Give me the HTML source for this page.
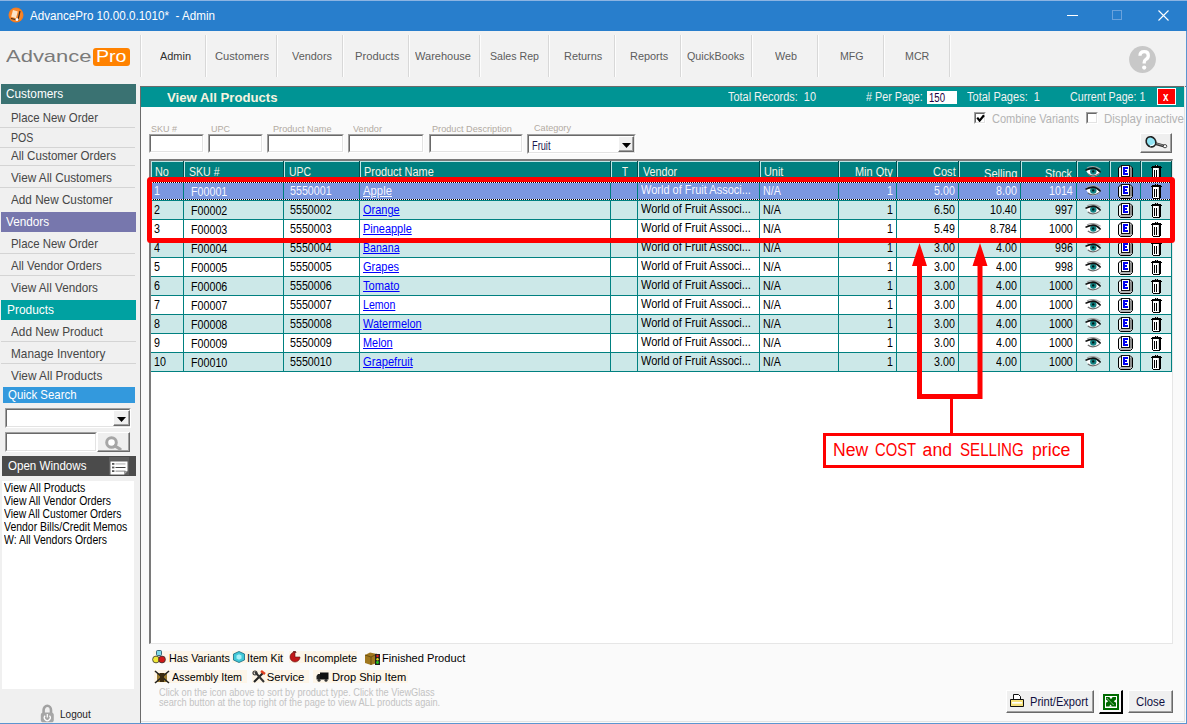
<!DOCTYPE html><html><head><meta charset="utf-8"><style>
html,body{margin:0;padding:0;}
body{width:1187px;height:724px;overflow:hidden;position:relative;background:#f0f0f0;font-family:"Liberation Sans",sans-serif;}
.t{position:absolute;white-space:pre;}
svg{display:block}
</style></head><body>
<div style="position:absolute;left:0px;top:0px;width:1187px;height:31px;background:#287ecc;"></div>
<div style="position:absolute;left:0px;top:0px;width:1187px;height:1px;background:#8cb4e2;"></div>
<svg style="position:absolute;left:8px;top:7px;" width="16" height="16" viewBox="0 0 16 16"><circle cx="8" cy="8" r="7.5" fill="#f47b20"/><circle cx="8" cy="8" r="6.5" fill="#f8862a"/><rect x="4" y="3.5" width="5" height="7" fill="#fde3c8" transform="rotate(15 6 7)"/><path d="M3 11.5 L10 13 L12 4" stroke="#3a2a20" stroke-width="1.2" fill="none"/><circle cx="9" cy="12.5" r="1.5" fill="#fff"/></svg>
<div class="t" style="left:29.50px;top:9.94px;font-size:12.30px;line-height:12.30px;color:#fff;transform:scaleX(0.9460);transform-origin:0 0;">AdvancePro 10.00.0.1010*  - Admin</div>
<div style="position:absolute;left:1067px;top:15px;width:11px;height:1px;background:#fff;"></div>
<div style="position:absolute;left:1112px;top:10px;width:10px;height:10px;background:transparent;box-sizing:border-box;border:1px solid #6aa2dc;"></div>
<svg style="position:absolute;left:1158px;top:10px;" width="11" height="11" viewBox="0 0 11 11"><path d="M0.5 0.5 L10.5 10.5 M10.5 0.5 L0.5 10.5" stroke="#fff" stroke-width="1.1"/></svg>
<div style="position:absolute;left:0px;top:31px;width:1187px;height:54px;background:#f2f2f2;"></div>
<div class="t" style="left:5.50px;top:48.46px;font-size:17.00px;line-height:17.00px;color:#7a7a7a;transform:scaleX(1.2929);transform-origin:0 0;font-weight:normal;">Advance</div>
<div style="position:absolute;left:93px;top:48px;width:37px;height:18px;background:#ff8200;border-radius:3px;"></div>
<div class="t" style="left:96.00px;top:48.46px;font-size:17.00px;line-height:17.00px;color:#fff;transform:scaleX(1.1538);transform-origin:0 0;">Pro</div>
<div style="position:absolute;left:140px;top:35px;width:1px;height:42px;background:#d8d8d8;"></div>
<div style="position:absolute;left:141px;top:35px;width:1px;height:42px;background:#fdfdfd;"></div>
<div style="position:absolute;left:205px;top:35px;width:1px;height:42px;background:#d8d8d8;"></div>
<div style="position:absolute;left:206px;top:35px;width:1px;height:42px;background:#fdfdfd;"></div>
<div style="position:absolute;left:276px;top:35px;width:1px;height:42px;background:#d8d8d8;"></div>
<div style="position:absolute;left:277px;top:35px;width:1px;height:42px;background:#fdfdfd;"></div>
<div style="position:absolute;left:342px;top:35px;width:1px;height:42px;background:#d8d8d8;"></div>
<div style="position:absolute;left:343px;top:35px;width:1px;height:42px;background:#fdfdfd;"></div>
<div style="position:absolute;left:408px;top:35px;width:1px;height:42px;background:#d8d8d8;"></div>
<div style="position:absolute;left:409px;top:35px;width:1px;height:42px;background:#fdfdfd;"></div>
<div style="position:absolute;left:479px;top:35px;width:1px;height:42px;background:#d8d8d8;"></div>
<div style="position:absolute;left:480px;top:35px;width:1px;height:42px;background:#fdfdfd;"></div>
<div style="position:absolute;left:548px;top:35px;width:1px;height:42px;background:#d8d8d8;"></div>
<div style="position:absolute;left:549px;top:35px;width:1px;height:42px;background:#fdfdfd;"></div>
<div style="position:absolute;left:614px;top:35px;width:1px;height:42px;background:#d8d8d8;"></div>
<div style="position:absolute;left:615px;top:35px;width:1px;height:42px;background:#fdfdfd;"></div>
<div style="position:absolute;left:680px;top:35px;width:1px;height:42px;background:#d8d8d8;"></div>
<div style="position:absolute;left:681px;top:35px;width:1px;height:42px;background:#fdfdfd;"></div>
<div style="position:absolute;left:751px;top:35px;width:1px;height:42px;background:#d8d8d8;"></div>
<div style="position:absolute;left:752px;top:35px;width:1px;height:42px;background:#fdfdfd;"></div>
<div style="position:absolute;left:817px;top:35px;width:1px;height:42px;background:#d8d8d8;"></div>
<div style="position:absolute;left:818px;top:35px;width:1px;height:42px;background:#fdfdfd;"></div>
<div style="position:absolute;left:883px;top:35px;width:1px;height:42px;background:#d8d8d8;"></div>
<div style="position:absolute;left:884px;top:35px;width:1px;height:42px;background:#fdfdfd;"></div>
<div style="position:absolute;left:949px;top:35px;width:1px;height:42px;background:#d8d8d8;"></div>
<div style="position:absolute;left:950px;top:35px;width:1px;height:42px;background:#fdfdfd;"></div>
<div class="t" style="left:159.50px;top:50.56px;font-size:11.80px;line-height:11.80px;color:#303030;transform:scaleX(0.9267);transform-origin:0 0;">Admin</div>
<div class="t" style="left:214.60px;top:50.56px;font-size:11.80px;line-height:11.80px;color:#5c5c5c;transform:scaleX(0.9465);transform-origin:0 0;">Customers</div>
<div class="t" style="left:291.50px;top:50.56px;font-size:11.80px;line-height:11.80px;color:#5c5c5c;transform:scaleX(0.9237);transform-origin:0 0;">Vendors</div>
<div class="t" style="left:355.00px;top:50.56px;font-size:11.80px;line-height:11.80px;color:#5c5c5c;transform:scaleX(0.9516);transform-origin:0 0;">Products</div>
<div class="t" style="left:415.40px;top:50.56px;font-size:11.80px;line-height:11.80px;color:#5c5c5c;transform:scaleX(0.9351);transform-origin:0 0;">Warehouse</div>
<div class="t" style="left:490.00px;top:50.56px;font-size:11.80px;line-height:11.80px;color:#5c5c5c;transform:scaleX(0.8998);transform-origin:0 0;">Sales Rep</div>
<div class="t" style="left:564.40px;top:50.56px;font-size:11.80px;line-height:11.80px;color:#5c5c5c;transform:scaleX(0.9249);transform-origin:0 0;">Returns</div>
<div class="t" style="left:630.40px;top:50.56px;font-size:11.80px;line-height:11.80px;color:#5c5c5c;transform:scaleX(0.9249);transform-origin:0 0;">Reports</div>
<div class="t" style="left:686.60px;top:50.56px;font-size:11.80px;line-height:11.80px;color:#5c5c5c;transform:scaleX(0.9118);transform-origin:0 0;">QuickBooks</div>
<div class="t" style="left:775.40px;top:50.56px;font-size:11.80px;line-height:11.80px;color:#5c5c5c;transform:scaleX(0.9139);transform-origin:0 0;">Web</div>
<div class="t" style="left:839.50px;top:50.56px;font-size:11.80px;line-height:11.80px;color:#5c5c5c;transform:scaleX(0.9009);transform-origin:0 0;">MFG</div>
<div class="t" style="left:905.10px;top:50.56px;font-size:11.80px;line-height:11.80px;color:#5c5c5c;transform:scaleX(0.9052);transform-origin:0 0;">MCR</div>
<svg style="position:absolute;left:1129px;top:46px;" width="27" height="27" viewBox="0 0 27 27"><circle cx="13.5" cy="13.5" r="13.4" fill="#c8c8c8"/><path d="M11 9.8 Q11 5.6 15.2 5.6 Q19.3 5.6 19.3 9.4 Q19.3 12 16.9 13.4 Q15.2 14.5 15.2 16.6 V17.4" stroke="#fff" stroke-width="3.3" fill="none"/><circle cx="15.2" cy="21.6" r="2.1" fill="#fff"/></svg>
<div style="position:absolute;left:1px;top:84px;width:135px;height:20px;background:#3a7272;"></div>
<div class="t" style="left:5.60px;top:87.65px;font-size:12.40px;line-height:12.40px;color:#fff;transform:scaleX(0.9541);transform-origin:0 0;">Customers</div>
<div class="t" style="left:10.60px;top:111.81px;font-size:12.10px;line-height:12.10px;color:#464646;transform:scaleX(0.9442);transform-origin:0 0;">Place New Order</div>
<div style="position:absolute;left:0px;top:127px;width:135px;height:1px;background:#d4d4d4;"></div>
<div class="t" style="left:10.60px;top:131.91px;font-size:12.10px;line-height:12.10px;color:#464646;transform:scaleX(0.8774);transform-origin:0 0;">POS</div>
<div style="position:absolute;left:0px;top:147px;width:135px;height:1px;background:#d4d4d4;"></div>
<div class="t" style="left:10.60px;top:149.71px;font-size:12.10px;line-height:12.10px;color:#464646;transform:scaleX(0.9578);transform-origin:0 0;">All Customer Orders</div>
<div style="position:absolute;left:0px;top:165px;width:135px;height:1px;background:#d4d4d4;"></div>
<div class="t" style="left:10.90px;top:171.91px;font-size:12.10px;line-height:12.10px;color:#464646;transform:scaleX(0.9712);transform-origin:0 0;">View All Customers</div>
<div style="position:absolute;left:0px;top:187px;width:135px;height:1px;background:#d4d4d4;"></div>
<div class="t" style="left:11.40px;top:193.71px;font-size:12.10px;line-height:12.10px;color:#464646;transform:scaleX(0.9704);transform-origin:0 0;">Add New Customer</div>
<div style="position:absolute;left:1px;top:212px;width:135px;height:20px;background:#7777ad;"></div>
<div class="t" style="left:6.20px;top:215.85px;font-size:12.40px;line-height:12.40px;color:#fff;transform:scaleX(0.9493);transform-origin:0 0;">Vendors</div>
<div class="t" style="left:10.60px;top:237.81px;font-size:12.10px;line-height:12.10px;color:#464646;transform:scaleX(0.9442);transform-origin:0 0;">Place New Order</div>
<div style="position:absolute;left:0px;top:253px;width:135px;height:1px;background:#d4d4d4;"></div>
<div class="t" style="left:10.60px;top:260.01px;font-size:12.10px;line-height:12.10px;color:#464646;transform:scaleX(0.9505);transform-origin:0 0;">All Vendor Orders</div>
<div style="position:absolute;left:0px;top:275px;width:135px;height:1px;background:#d4d4d4;"></div>
<div class="t" style="left:10.60px;top:281.81px;font-size:12.10px;line-height:12.10px;color:#464646;transform:scaleX(0.9677);transform-origin:0 0;">View All Vendors</div>
<div style="position:absolute;left:1px;top:300px;width:135px;height:20px;background:#00a1a1;"></div>
<div class="t" style="left:6.50px;top:303.85px;font-size:12.40px;line-height:12.40px;color:#fff;transform:scaleX(0.9608);transform-origin:0 0;">Products</div>
<div class="t" style="left:11.40px;top:325.91px;font-size:12.10px;line-height:12.10px;color:#464646;transform:scaleX(0.9752);transform-origin:0 0;">Add New Product</div>
<div style="position:absolute;left:1px;top:341px;width:135px;height:1px;background:#d4d4d4;"></div>
<div class="t" style="left:10.60px;top:348.11px;font-size:12.10px;line-height:12.10px;color:#464646;transform:scaleX(0.9756);transform-origin:0 0;">Manage Inventory</div>
<div style="position:absolute;left:1px;top:363px;width:135px;height:1px;background:#d4d4d4;"></div>
<div class="t" style="left:10.60px;top:369.91px;font-size:12.10px;line-height:12.10px;color:#464646;transform:scaleX(0.9797);transform-origin:0 0;">View All Products</div>
<div style="position:absolute;left:3px;top:387px;width:132px;height:16px;background:#3399dd;"></div>
<div class="t" style="left:7.50px;top:388.85px;font-size:12.40px;line-height:12.40px;color:#fff;transform:scaleX(0.9213);transform-origin:0 0;">Quick Search</div>
<div style="position:absolute;left:5px;top:408px;width:126px;height:20px;background:#fff;box-sizing:border-box;border-top:1px solid #a0a0a0;border-left:1px solid #a0a0a0;border-bottom:1px solid #fff;border-right:1px solid #fff;"><div style="position:absolute;left:0;top:0;right:0;bottom:0;border-top:1px solid #696969;border-left:1px solid #696969;border-bottom:1px solid #e3e3e3;border-right:1px solid #e3e3e3;"></div></div>
<div style="position:absolute;left:113px;top:410px;width:17px;height:16px;background:#f0f0f0;box-sizing:border-box;border-top:1px solid #fff;border-left:1px solid #fff;border-bottom:1px solid #696969;border-right:1px solid #696969;"><div style="position:absolute;left:0;top:0;right:0;bottom:0;border-bottom:1px solid #a0a0a0;border-right:1px solid #a0a0a0;"></div></div>
<svg style="position:absolute;left:117px;top:417px;" width="9" height="5" viewBox="0 0 9 5"><path d="M0 0 L9 0 L4.5 5 Z" fill="#000"/></svg>
<div style="position:absolute;left:5px;top:432px;width:92px;height:20px;background:#fff;box-sizing:border-box;border-top:1px solid #a0a0a0;border-left:1px solid #a0a0a0;border-bottom:1px solid #fff;border-right:1px solid #fff;"><div style="position:absolute;left:0;top:0;right:0;bottom:0;border-top:1px solid #696969;border-left:1px solid #696969;border-bottom:1px solid #e3e3e3;border-right:1px solid #e3e3e3;"></div></div>
<div style="position:absolute;left:97px;top:432px;width:33px;height:20px;background:#efefef;box-sizing:border-box;border-top:1px solid #fff;border-left:1px solid #fff;border-bottom:1px solid #696969;border-right:1px solid #696969;"><div style="position:absolute;left:0;top:0;right:0;bottom:0;border-bottom:1px solid #a0a0a0;border-right:1px solid #a0a0a0;"></div></div>
<svg style="position:absolute;left:103px;top:434px;" width="22" height="16" viewBox="0 0 22 16"><circle cx="8.5" cy="8.5" r="4.8" stroke="#a6a6a6" stroke-width="3" fill="#fff"/><path d="M12 12 L17 15" stroke="#a6a6a6" stroke-width="3.2" stroke-linecap="round"/></svg>
<div style="position:absolute;left:2px;top:456px;width:134px;height:20px;background:#4b4b4b;"></div>
<div class="t" style="left:7.50px;top:459.55px;font-size:12.40px;line-height:12.40px;color:#fff;transform:scaleX(0.9337);transform-origin:0 0;">Open Windows</div>
<div style="position:absolute;left:109px;top:457px;width:20px;height:18px;background:#5e5e5e;"></div>
<svg style="position:absolute;left:110px;top:461px;" width="18" height="14" viewBox="0 0 18 14"><path d="M0.5 0.5 H17.5 V10 L14 13.5 H0.5 Z" fill="#fff"/><path d="M17.5 10 L14 13.5 V10 Z" fill="#9a9a9a"/><g fill="#555"><rect x="2" y="2" width="2.4" height="1.8"/><rect x="2" y="5.6" width="2.4" height="1.8"/><rect x="2" y="9.2" width="2.4" height="1.8"/></g><rect x="5.5" y="2.2" width="10" height="1.4" fill="#c4c4c4"/><rect x="5.5" y="6" width="10" height="1" fill="#444"/><rect x="5.5" y="9.6" width="10" height="1" fill="#888"/></svg>
<div style="position:absolute;left:2px;top:481px;width:132px;height:208px;background:#fff;"></div>
<div class="t" style="left:4.20px;top:481.79px;font-size:12.00px;line-height:12.00px;color:#000;transform:scaleX(0.8787);transform-origin:0 0;">View All Products</div>
<div class="t" style="left:4.20px;top:494.84px;font-size:12.00px;line-height:12.00px;color:#000;transform:scaleX(0.8686);transform-origin:0 0;">View All Vendor Orders</div>
<div class="t" style="left:4.20px;top:507.89px;font-size:12.00px;line-height:12.00px;color:#000;transform:scaleX(0.8552);transform-origin:0 0;">View All Customer Orders</div>
<div class="t" style="left:4.20px;top:520.94px;font-size:12.00px;line-height:12.00px;color:#000;transform:scaleX(0.8719);transform-origin:0 0;">Vendor Bills/Credit Memos</div>
<div class="t" style="left:4.20px;top:533.99px;font-size:12.00px;line-height:12.00px;color:#000;transform:scaleX(0.8741);transform-origin:0 0;">W: All Vendors Orders</div>
<svg style="position:absolute;left:40px;top:704px;" width="15" height="19" viewBox="0 0 15 19"><path d="M3.6 9.5 V6 A3.7 4.2 0 0 1 11 6 V9.5" stroke="#a2a2a2" stroke-width="2.6" fill="none"/><rect x="0.8" y="8.5" width="13" height="9.8" rx="2.6" fill="#a6a6a6"/><path d="M5.1 11.6 A3 3 0 1 0 9.5 11.6" stroke="#fff" stroke-width="1.2" fill="none"/><path d="M7.3 10 V13.4" stroke="#fff" stroke-width="1.2"/></svg>
<div class="t" style="left:59.80px;top:708.90px;font-size:11.40px;line-height:11.40px;color:#1e1e1e;transform:scaleX(0.8829);transform-origin:0 0;">Logout</div>
<div style="position:absolute;left:140px;top:86px;width:1047px;height:637px;background:#fafafa;box-sizing:border-box;border-left:1px solid #6b6b6b;border-top:1px solid #6b6b6b;"></div>
<div style="position:absolute;left:1184px;top:86px;width:1px;height:636px;background:#e3e3e3;"></div>
<div style="position:absolute;left:141px;top:721px;width:1044px;height:1px;background:#e3e3e3;"></div>
<div style="position:absolute;left:141px;top:87px;width:1043px;height:20px;background:#009494;"></div>
<div class="t" style="left:167.30px;top:91.09px;font-size:13.30px;line-height:13.30px;color:#f7f3e0;font-weight:bold;transform:scaleX(0.9912);transform-origin:0 0;">View All Products</div>
<div class="t" style="left:727.90px;top:90.59px;font-size:12.00px;line-height:12.00px;color:#f2f2f2;transform:scaleX(0.9098);transform-origin:0 0;">Total Records:  10</div>
<div class="t" style="left:865.90px;top:91.49px;font-size:12.00px;line-height:12.00px;color:#f2f2f2;transform:scaleX(0.8965);transform-origin:0 0;"># Per Page:</div>
<div style="position:absolute;left:927px;top:91px;width:30px;height:13px;background:#fff;"></div>
<div class="t" style="left:928.50px;top:92.19px;font-size:12.00px;line-height:12.00px;color:#200040;transform:scaleX(0.7984);transform-origin:0 0;">150</div>
<div class="t" style="left:967.00px;top:90.59px;font-size:12.00px;line-height:12.00px;color:#f2f2f2;transform:scaleX(0.9196);transform-origin:0 0;">Total Pages:  1</div>
<div class="t" style="left:1069.60px;top:91.19px;font-size:12.00px;line-height:12.00px;color:#f2f2f2;transform:scaleX(0.8900);transform-origin:0 0;">Current Page: 1</div>
<div style="position:absolute;left:1157px;top:88px;width:19px;height:17px;background:#fff;"></div>
<div style="position:absolute;left:1158px;top:89px;width:17px;height:15px;background:#f00;"></div>
<div class="t" style="left:1163.20px;top:90.99px;font-size:12.00px;line-height:12.00px;color:#fff;font-weight:bold;transform:scaleX(0.8258);transform-origin:0 0;">x</div>
<div style="position:absolute;left:974px;top:112px;width:12px;height:12px;background:#fff;box-sizing:border-box;border-top:1px solid #a0a0a0;border-left:1px solid #a0a0a0;border-bottom:1px solid #fff;border-right:1px solid #fff;"><div style="position:absolute;left:0;top:0;right:0;bottom:0;border-top:1px solid #696969;border-left:1px solid #696969;border-bottom:1px solid #e3e3e3;border-right:1px solid #e3e3e3;"></div></div>
<svg style="position:absolute;left:976px;top:114px;" width="9" height="8" viewBox="0 0 9 8"><path d="M1.2 3.6 L3.6 6.6 L8 1.2" stroke="#000" stroke-width="2.2" fill="none"/></svg>
<div class="t" style="left:992.20px;top:113.18px;font-size:12.60px;line-height:12.60px;color:#b4b4b4;transform:scaleX(0.8768);transform-origin:0 0;">Combine Variants</div>
<div style="position:absolute;left:1086px;top:112px;width:12px;height:12px;background:#fff;box-sizing:border-box;border-top:1px solid #a0a0a0;border-left:1px solid #a0a0a0;border-bottom:1px solid #fff;border-right:1px solid #fff;"><div style="position:absolute;left:0;top:0;right:0;bottom:0;border-top:1px solid #696969;border-left:1px solid #696969;border-bottom:1px solid #e3e3e3;border-right:1px solid #e3e3e3;"></div></div>
<div class="t" style="left:1104.40px;top:113.18px;font-size:12.60px;line-height:12.60px;color:#b4b4b4;transform:scaleX(0.9142);transform-origin:0 0;">Display inactive</div>
<div class="t" style="left:150.90px;top:124.12px;font-size:9.60px;line-height:9.60px;color:#b2aaa2;transform:scaleX(0.9371);transform-origin:0 0;">SKU #</div>
<div class="t" style="left:211.10px;top:124.12px;font-size:9.60px;line-height:9.60px;color:#b2aaa2;transform:scaleX(0.9380);transform-origin:0 0;">UPC</div>
<div class="t" style="left:273.20px;top:124.02px;font-size:9.60px;line-height:9.60px;color:#b2aaa2;transform:scaleX(0.9536);transform-origin:0 0;">Product Name</div>
<div class="t" style="left:353.00px;top:124.12px;font-size:9.60px;line-height:9.60px;color:#b2aaa2;transform:scaleX(0.9529);transform-origin:0 0;">Vendor</div>
<div class="t" style="left:431.50px;top:124.22px;font-size:9.60px;line-height:9.60px;color:#b2aaa2;transform:scaleX(0.9551);transform-origin:0 0;">Product Description</div>
<div class="t" style="left:534.00px;top:122.62px;font-size:9.60px;line-height:9.60px;color:#b2aaa2;transform:scaleX(0.9493);transform-origin:0 0;">Category</div>
<div style="position:absolute;left:149px;top:134px;width:55px;height:19px;background:#fff;box-sizing:border-box;border-top:1px solid #a0a0a0;border-left:1px solid #a0a0a0;border-bottom:1px solid #fff;border-right:1px solid #fff;"><div style="position:absolute;left:0;top:0;right:0;bottom:0;border-top:1px solid #696969;border-left:1px solid #696969;border-bottom:1px solid #e3e3e3;border-right:1px solid #e3e3e3;"></div></div>
<div style="position:absolute;left:208px;top:134px;width:55px;height:19px;background:#fff;box-sizing:border-box;border-top:1px solid #a0a0a0;border-left:1px solid #a0a0a0;border-bottom:1px solid #fff;border-right:1px solid #fff;"><div style="position:absolute;left:0;top:0;right:0;bottom:0;border-top:1px solid #696969;border-left:1px solid #696969;border-bottom:1px solid #e3e3e3;border-right:1px solid #e3e3e3;"></div></div>
<div style="position:absolute;left:267px;top:134px;width:77px;height:19px;background:#fff;box-sizing:border-box;border-top:1px solid #a0a0a0;border-left:1px solid #a0a0a0;border-bottom:1px solid #fff;border-right:1px solid #fff;"><div style="position:absolute;left:0;top:0;right:0;bottom:0;border-top:1px solid #696969;border-left:1px solid #696969;border-bottom:1px solid #e3e3e3;border-right:1px solid #e3e3e3;"></div></div>
<div style="position:absolute;left:348px;top:134px;width:76px;height:19px;background:#fff;box-sizing:border-box;border-top:1px solid #a0a0a0;border-left:1px solid #a0a0a0;border-bottom:1px solid #fff;border-right:1px solid #fff;"><div style="position:absolute;left:0;top:0;right:0;bottom:0;border-top:1px solid #696969;border-left:1px solid #696969;border-bottom:1px solid #e3e3e3;border-right:1px solid #e3e3e3;"></div></div>
<div style="position:absolute;left:429px;top:134px;width:94px;height:19px;background:#fff;box-sizing:border-box;border-top:1px solid #a0a0a0;border-left:1px solid #a0a0a0;border-bottom:1px solid #fff;border-right:1px solid #fff;"><div style="position:absolute;left:0;top:0;right:0;bottom:0;border-top:1px solid #696969;border-left:1px solid #696969;border-bottom:1px solid #e3e3e3;border-right:1px solid #e3e3e3;"></div></div>
<div style="position:absolute;left:527px;top:134px;width:109px;height:20px;background:#fff;box-sizing:border-box;border-top:1px solid #a0a0a0;border-left:1px solid #a0a0a0;border-bottom:1px solid #fff;border-right:1px solid #fff;"><div style="position:absolute;left:0;top:0;right:0;bottom:0;border-top:1px solid #696969;border-left:1px solid #696969;border-bottom:1px solid #e3e3e3;border-right:1px solid #e3e3e3;"></div></div>
<div style="position:absolute;left:618px;top:136px;width:16px;height:16px;background:#f0f0f0;box-sizing:border-box;border-top:1px solid #fff;border-left:1px solid #fff;border-bottom:1px solid #696969;border-right:1px solid #696969;"><div style="position:absolute;left:0;top:0;right:0;bottom:0;border-bottom:1px solid #a0a0a0;border-right:1px solid #a0a0a0;"></div></div>
<svg style="position:absolute;left:622px;top:143px;" width="9" height="5" viewBox="0 0 9 5"><path d="M0 0 L9 0 L4.5 5 Z" fill="#000"/></svg>
<div class="t" style="left:531.60px;top:138.85px;font-size:13.00px;line-height:13.00px;color:#1a1a50;transform:scaleX(0.7115);transform-origin:0 0;">Fruit</div>
<div style="position:absolute;left:1140px;top:133px;width:32px;height:20px;background:#efefef;box-sizing:border-box;border-top:1px solid #fff;border-left:1px solid #fff;border-bottom:1px solid #696969;border-right:1px solid #696969;"><div style="position:absolute;left:0;top:0;right:0;bottom:0;border-bottom:1px solid #a0a0a0;border-right:1px solid #a0a0a0;"></div></div>
<svg style="position:absolute;left:1145px;top:135px;" width="23" height="15" viewBox="0 0 23 15"><path d="M9.5 8.3 L18.5 10.8" stroke="#333" stroke-width="2.8" stroke-linecap="round"/><path d="M10 8.2 L18 10.4" stroke="#aaa" stroke-width="0.8"/><ellipse cx="20" cy="11.2" rx="1.8" ry="1.6" fill="#fff" stroke="#333" stroke-width="0.9"/><ellipse cx="6" cy="6.8" rx="4.6" ry="5.3" transform="rotate(-35 6 6.8)" fill="#90e4f4" stroke="#222" stroke-width="1.6"/><path d="M5 11 Q8 10.5 9.5 8.5" stroke="#fff" stroke-width="1.2" fill="none"/></svg>
<div style="position:absolute;left:149px;top:159px;width:1024px;height:485px;background:#fff;box-sizing:border-box;border-top:2px solid #7a7a7a;border-left:2px solid #7a7a7a;border-right:1px solid #e6e6e6;border-bottom:1px solid #e6e6e6;"></div>
<div style="position:absolute;left:151px;top:161px;width:1021px;height:21px;background:#008080;"></div>
<div style="position:absolute;left:151px;top:161px;width:33px;height:1px;background:#bfe6e6;"></div>
<div style="position:absolute;left:151px;top:161px;width:1px;height:21px;background:#bfe6e6;"></div>
<div style="position:absolute;left:183px;top:161px;width:1px;height:21px;background:#004f4f;"></div>
<div style="position:absolute;left:184px;top:161px;width:100px;height:1px;background:#bfe6e6;"></div>
<div style="position:absolute;left:184px;top:161px;width:1px;height:21px;background:#bfe6e6;"></div>
<div style="position:absolute;left:283px;top:161px;width:1px;height:21px;background:#004f4f;"></div>
<div style="position:absolute;left:284px;top:161px;width:76px;height:1px;background:#bfe6e6;"></div>
<div style="position:absolute;left:284px;top:161px;width:1px;height:21px;background:#bfe6e6;"></div>
<div style="position:absolute;left:359px;top:161px;width:1px;height:21px;background:#004f4f;"></div>
<div style="position:absolute;left:360px;top:161px;width:251px;height:1px;background:#bfe6e6;"></div>
<div style="position:absolute;left:360px;top:161px;width:1px;height:21px;background:#bfe6e6;"></div>
<div style="position:absolute;left:610px;top:161px;width:1px;height:21px;background:#004f4f;"></div>
<div style="position:absolute;left:611px;top:161px;width:27px;height:1px;background:#bfe6e6;"></div>
<div style="position:absolute;left:611px;top:161px;width:1px;height:21px;background:#bfe6e6;"></div>
<div style="position:absolute;left:637px;top:161px;width:1px;height:21px;background:#004f4f;"></div>
<div style="position:absolute;left:638px;top:161px;width:122px;height:1px;background:#bfe6e6;"></div>
<div style="position:absolute;left:638px;top:161px;width:1px;height:21px;background:#bfe6e6;"></div>
<div style="position:absolute;left:759px;top:161px;width:1px;height:21px;background:#004f4f;"></div>
<div style="position:absolute;left:760px;top:161px;width:79px;height:1px;background:#bfe6e6;"></div>
<div style="position:absolute;left:760px;top:161px;width:1px;height:21px;background:#bfe6e6;"></div>
<div style="position:absolute;left:838px;top:161px;width:1px;height:21px;background:#004f4f;"></div>
<div style="position:absolute;left:839px;top:161px;width:58px;height:1px;background:#bfe6e6;"></div>
<div style="position:absolute;left:839px;top:161px;width:1px;height:21px;background:#bfe6e6;"></div>
<div style="position:absolute;left:896px;top:161px;width:1px;height:21px;background:#004f4f;"></div>
<div style="position:absolute;left:897px;top:161px;width:62px;height:1px;background:#bfe6e6;"></div>
<div style="position:absolute;left:897px;top:161px;width:1px;height:21px;background:#bfe6e6;"></div>
<div style="position:absolute;left:958px;top:161px;width:1px;height:21px;background:#004f4f;"></div>
<div style="position:absolute;left:959px;top:161px;width:62px;height:1px;background:#bfe6e6;"></div>
<div style="position:absolute;left:959px;top:161px;width:1px;height:21px;background:#bfe6e6;"></div>
<div style="position:absolute;left:1020px;top:161px;width:1px;height:21px;background:#004f4f;"></div>
<div style="position:absolute;left:1021px;top:161px;width:56px;height:1px;background:#bfe6e6;"></div>
<div style="position:absolute;left:1021px;top:161px;width:1px;height:21px;background:#bfe6e6;"></div>
<div style="position:absolute;left:1076px;top:161px;width:1px;height:21px;background:#004f4f;"></div>
<div style="position:absolute;left:1077px;top:161px;width:33px;height:1px;background:#bfe6e6;"></div>
<div style="position:absolute;left:1077px;top:161px;width:1px;height:21px;background:#bfe6e6;"></div>
<div style="position:absolute;left:1109px;top:161px;width:1px;height:21px;background:#004f4f;"></div>
<div style="position:absolute;left:1110px;top:161px;width:31px;height:1px;background:#bfe6e6;"></div>
<div style="position:absolute;left:1110px;top:161px;width:1px;height:21px;background:#bfe6e6;"></div>
<div style="position:absolute;left:1140px;top:161px;width:1px;height:21px;background:#004f4f;"></div>
<div style="position:absolute;left:1141px;top:161px;width:31px;height:1px;background:#bfe6e6;"></div>
<div style="position:absolute;left:1141px;top:161px;width:1px;height:21px;background:#bfe6e6;"></div>
<div style="position:absolute;left:1171px;top:161px;width:1px;height:21px;background:#004f4f;"></div>
<div class="t" style="left:155.40px;top:166.39px;font-size:12.00px;line-height:12.00px;color:#f4f4e8;transform:scaleX(0.9049);transform-origin:0 0;">No</div>
<div class="t" style="left:188.60px;top:166.39px;font-size:12.00px;line-height:12.00px;color:#f4f4e8;transform:scaleX(0.8795);transform-origin:0 0;">SKU #</div>
<div class="t" style="left:288.70px;top:166.39px;font-size:12.00px;line-height:12.00px;color:#f4f4e8;transform:scaleX(0.8689);transform-origin:0 0;">UPC</div>
<div class="t" style="left:363.90px;top:166.39px;font-size:12.00px;line-height:12.00px;color:#f4f4e8;transform:scaleX(0.9090);transform-origin:0 0;">Product Name</div>
<div class="t" style="left:621.60px;top:166.39px;font-size:12.00px;line-height:12.00px;color:#f4f4e8;transform:scaleX(0.8197);transform-origin:0 0;">T</div>
<div class="t" style="left:642.60px;top:166.39px;font-size:12.00px;line-height:12.00px;color:#f4f4e8;transform:scaleX(0.8991);transform-origin:0 0;">Vendor</div>
<div class="t" style="left:764.40px;top:166.39px;font-size:12.00px;line-height:12.00px;color:#f4f4e8;transform:scaleX(0.9082);transform-origin:0 0;">Unit</div>
<div class="t" style="left:854.70px;top:166.39px;font-size:12.00px;line-height:12.00px;color:#f4f4e8;transform:scaleX(0.9119);transform-origin:0 0;">Min Qty</div>
<div class="t" style="left:932.60px;top:166.39px;font-size:12.00px;line-height:12.00px;color:#f4f4e8;transform:scaleX(0.9205);transform-origin:0 0;">Cost</div>
<div class="t" style="left:983.70px;top:167.99px;font-size:12.00px;line-height:12.00px;color:#f4f4e8;transform:scaleX(0.9250);transform-origin:0 0;">Selling</div>
<div class="t" style="left:1045.20px;top:167.99px;font-size:12.00px;line-height:12.00px;color:#f4f4e8;transform:scaleX(0.8982);transform-origin:0 0;">Stock</div>
<svg style="position:absolute;left:1085px;top:166px;" width="16" height="12" viewBox="0 0 16 12"><path d="M2 2 Q8 -1.5 15.5 3.2" stroke="#a0a0a0" stroke-width="1.1" fill="none"/><path d="M1 4.5 Q8 1.5 15.5 6.2 Q12 10.5 8 10.5 Q4 10.5 1 4.5 Z" fill="#fff"/><circle cx="8.3" cy="5.6" r="3.2" fill="#108282"/><circle cx="8.2" cy="5.4" r="1.2" fill="#001818"/><path d="M2.8 8 Q8 12 14.5 7.4" stroke="#6a6a6a" stroke-width="1.1" fill="none"/><path d="M0.5 4.4 Q4 2.3 8 2.1 Q12 2.3 15.6 6.5" stroke="#111" stroke-width="1.6" fill="none"/></svg>
<svg style="position:absolute;left:1118px;top:163px;" width="15" height="18" viewBox="0 0 15 18"><path d="M3 2.5 H12 L14.5 5 V14.5 L12.5 16.5 H2.5 L0.5 14.5 V5 Z" fill="#c0c0c0" stroke="#000" stroke-width="1"/><g shape-rendering="crispEdges"><rect x="1" y="5" width="2" height="9" fill="#f4f4f4"/><rect x="12" y="5" width="2" height="9" fill="#8c8c8c"/><rect x="2" y="14" width="11" height="2" fill="#b4b4b4"/><rect x="3" y="2" width="9" height="12" fill="#111"/><rect x="4" y="3" width="7" height="10" fill="#fff"/><path d="M5 4 H10 V6 H7 V7 H9 V9 H7 V10 H10 V12 H5 Z" fill="#0000f0"/></g></svg>
<svg style="position:absolute;left:1151px;top:163px;" width="12" height="18" viewBox="0 0 12 18"><g shape-rendering="crispEdges"><rect x="2" y="5" width="6" height="11" fill="#fff"/><g fill="#000"><rect x="4" y="2" width="1" height="1"/><rect x="6" y="2" width="1" height="1"/><rect x="1" y="3" width="9" height="2"/><rect x="0" y="3.5" width="11" height="1"/><rect x="1" y="5" width="1" height="11"/><rect x="8" y="5" width="2" height="11"/><rect x="3" y="7" width="1" height="8"/><rect x="5" y="7" width="1" height="8"/><rect x="2" y="16" width="7" height="1"/></g><rect x="5" y="2" width="1" height="1" fill="#bbb"/><rect x="7" y="5" width="1" height="10" fill="#ddd"/></g></svg>
<div style="position:absolute;left:151px;top:182px;width:1021px;height:18px;background:#7b97e0;"></div>
<div style="position:absolute;left:151px;top:200px;width:1021px;height:1px;background:#008080;"></div>
<div style="position:absolute;left:183px;top:182px;width:1px;height:19px;background:#008080;"></div>
<div style="position:absolute;left:283px;top:182px;width:1px;height:19px;background:#008080;"></div>
<div style="position:absolute;left:359px;top:182px;width:1px;height:19px;background:#008080;"></div>
<div style="position:absolute;left:610px;top:182px;width:1px;height:19px;background:#008080;"></div>
<div style="position:absolute;left:637px;top:182px;width:1px;height:19px;background:#008080;"></div>
<div style="position:absolute;left:759px;top:182px;width:1px;height:19px;background:#008080;"></div>
<div style="position:absolute;left:838px;top:182px;width:1px;height:19px;background:#008080;"></div>
<div style="position:absolute;left:896px;top:182px;width:1px;height:19px;background:#008080;"></div>
<div style="position:absolute;left:958px;top:182px;width:1px;height:19px;background:#008080;"></div>
<div style="position:absolute;left:1020px;top:182px;width:1px;height:19px;background:#008080;"></div>
<div style="position:absolute;left:1076px;top:182px;width:1px;height:19px;background:#008080;"></div>
<div style="position:absolute;left:1109px;top:182px;width:1px;height:19px;background:#008080;"></div>
<div style="position:absolute;left:1140px;top:182px;width:1px;height:19px;background:#008080;"></div>
<div style="position:absolute;left:1171px;top:182px;width:1px;height:19px;background:#008080;"></div>
<div class="t" style="left:153.80px;top:184.85px;font-size:12.40px;line-height:12.40px;color:#f4f4ff;transform:scaleX(0.8649);transform-origin:0 0;">1</div>
<div class="t" style="left:190.50px;top:185.85px;font-size:12.40px;line-height:12.40px;color:#f4f4ff;transform:scaleX(0.8635);transform-origin:0 0;">F00001</div>
<div class="t" style="left:290.30px;top:184.85px;font-size:12.40px;line-height:12.40px;color:#f4f4ff;transform:scaleX(0.8627);transform-origin:0 0;">5550001</div>
<div class="t" style="left:363.40px;top:185.25px;font-size:12.40px;line-height:12.40px;color:#f4f4ff;transform:scaleX(0.9136);transform-origin:0 0;text-decoration:underline;">Apple</div>
<div class="t" style="left:641.00px;top:183.85px;font-size:12.40px;line-height:12.40px;color:#f4f4ff;transform:scaleX(0.8884);transform-origin:0 0;">World of Fruit Associ...</div>
<div class="t" style="left:763.00px;top:184.85px;font-size:12.40px;line-height:12.40px;color:#f4f4ff;transform:scaleX(0.8616);transform-origin:0 0;">N/A</div>
<div class="t" style="left:886.55px;top:184.85px;font-size:12.40px;line-height:12.40px;color:#f4f4ff;transform:scaleX(0.8649);transform-origin:0 0;">1</div>
<div class="t" style="left:934.07px;top:184.85px;font-size:12.40px;line-height:12.40px;color:#f4f4ff;transform:scaleX(0.8637);transform-origin:0 0;">5.00</div>
<div class="t" style="left:995.77px;top:184.85px;font-size:12.40px;line-height:12.40px;color:#f4f4ff;transform:scaleX(0.8637);transform-origin:0 0;">8.00</div>
<div class="t" style="left:1048.89px;top:184.85px;font-size:12.40px;line-height:12.40px;color:#f4f4ff;transform:scaleX(0.8630);transform-origin:0 0;">1014</div>
<svg style="position:absolute;left:1085px;top:185px;" width="16" height="12" viewBox="0 0 16 12"><path d="M2 2 Q8 -1.5 15.5 3.2" stroke="#a0a0a0" stroke-width="1.1" fill="none"/><path d="M1 4.5 Q8 1.5 15.5 6.2 Q12 10.5 8 10.5 Q4 10.5 1 4.5 Z" fill="#fff"/><circle cx="8.3" cy="5.6" r="3.2" fill="#108282"/><circle cx="8.2" cy="5.4" r="1.2" fill="#001818"/><path d="M2.8 8 Q8 12 14.5 7.4" stroke="#6a6a6a" stroke-width="1.1" fill="none"/><path d="M0.5 4.4 Q4 2.3 8 2.1 Q12 2.3 15.6 6.5" stroke="#111" stroke-width="1.6" fill="none"/></svg>
<svg style="position:absolute;left:1118px;top:182px;" width="15" height="18" viewBox="0 0 15 18"><path d="M3 2.5 H12 L14.5 5 V14.5 L12.5 16.5 H2.5 L0.5 14.5 V5 Z" fill="#c0c0c0" stroke="#000" stroke-width="1"/><g shape-rendering="crispEdges"><rect x="1" y="5" width="2" height="9" fill="#f4f4f4"/><rect x="12" y="5" width="2" height="9" fill="#8c8c8c"/><rect x="2" y="14" width="11" height="2" fill="#b4b4b4"/><rect x="3" y="2" width="9" height="12" fill="#111"/><rect x="4" y="3" width="7" height="10" fill="#fff"/><path d="M5 4 H10 V6 H7 V7 H9 V9 H7 V10 H10 V12 H5 Z" fill="#0000f0"/></g></svg>
<svg style="position:absolute;left:1151px;top:182px;" width="12" height="18" viewBox="0 0 12 18"><g shape-rendering="crispEdges"><rect x="2" y="5" width="6" height="11" fill="#fff"/><g fill="#000"><rect x="4" y="2" width="1" height="1"/><rect x="6" y="2" width="1" height="1"/><rect x="1" y="3" width="9" height="2"/><rect x="0" y="3.5" width="11" height="1"/><rect x="1" y="5" width="1" height="11"/><rect x="8" y="5" width="2" height="11"/><rect x="3" y="7" width="1" height="8"/><rect x="5" y="7" width="1" height="8"/><rect x="2" y="16" width="7" height="1"/></g><rect x="5" y="2" width="1" height="1" fill="#bbb"/><rect x="7" y="5" width="1" height="10" fill="#ddd"/></g></svg>
<div style="position:absolute;left:151px;top:201px;width:1021px;height:18px;background:#cce8e8;"></div>
<div style="position:absolute;left:151px;top:219px;width:1021px;height:1px;background:#008080;"></div>
<div style="position:absolute;left:183px;top:201px;width:1px;height:19px;background:#008080;"></div>
<div style="position:absolute;left:283px;top:201px;width:1px;height:19px;background:#008080;"></div>
<div style="position:absolute;left:359px;top:201px;width:1px;height:19px;background:#008080;"></div>
<div style="position:absolute;left:610px;top:201px;width:1px;height:19px;background:#008080;"></div>
<div style="position:absolute;left:637px;top:201px;width:1px;height:19px;background:#008080;"></div>
<div style="position:absolute;left:759px;top:201px;width:1px;height:19px;background:#008080;"></div>
<div style="position:absolute;left:838px;top:201px;width:1px;height:19px;background:#008080;"></div>
<div style="position:absolute;left:896px;top:201px;width:1px;height:19px;background:#008080;"></div>
<div style="position:absolute;left:958px;top:201px;width:1px;height:19px;background:#008080;"></div>
<div style="position:absolute;left:1020px;top:201px;width:1px;height:19px;background:#008080;"></div>
<div style="position:absolute;left:1076px;top:201px;width:1px;height:19px;background:#008080;"></div>
<div style="position:absolute;left:1109px;top:201px;width:1px;height:19px;background:#008080;"></div>
<div style="position:absolute;left:1140px;top:201px;width:1px;height:19px;background:#008080;"></div>
<div style="position:absolute;left:1171px;top:201px;width:1px;height:19px;background:#008080;"></div>
<div class="t" style="left:153.80px;top:203.85px;font-size:12.40px;line-height:12.40px;color:#000;transform:scaleX(0.8649);transform-origin:0 0;">2</div>
<div class="t" style="left:190.50px;top:204.85px;font-size:12.40px;line-height:12.40px;color:#000;transform:scaleX(0.8635);transform-origin:0 0;">F00002</div>
<div class="t" style="left:290.30px;top:203.85px;font-size:12.40px;line-height:12.40px;color:#000;transform:scaleX(0.8627);transform-origin:0 0;">5550002</div>
<div class="t" style="left:363.40px;top:204.25px;font-size:12.40px;line-height:12.40px;color:#0000ff;transform:scaleX(0.8875);transform-origin:0 0;text-decoration:underline;">Orange</div>
<div class="t" style="left:641.00px;top:202.85px;font-size:12.40px;line-height:12.40px;color:#000;transform:scaleX(0.8884);transform-origin:0 0;">World of Fruit Associ...</div>
<div class="t" style="left:763.00px;top:203.85px;font-size:12.40px;line-height:12.40px;color:#000;transform:scaleX(0.8616);transform-origin:0 0;">N/A</div>
<div class="t" style="left:886.55px;top:203.85px;font-size:12.40px;line-height:12.40px;color:#000;transform:scaleX(0.8649);transform-origin:0 0;">1</div>
<div class="t" style="left:934.07px;top:203.85px;font-size:12.40px;line-height:12.40px;color:#000;transform:scaleX(0.8637);transform-origin:0 0;">6.50</div>
<div class="t" style="left:989.82px;top:203.85px;font-size:12.40px;line-height:12.40px;color:#000;transform:scaleX(0.8622);transform-origin:0 0;">10.40</div>
<div class="t" style="left:1054.84px;top:203.85px;font-size:12.40px;line-height:12.40px;color:#000;transform:scaleX(0.8623);transform-origin:0 0;">997</div>
<svg style="position:absolute;left:1085px;top:204px;" width="16" height="12" viewBox="0 0 16 12"><path d="M2 2 Q8 -1.5 15.5 3.2" stroke="#a0a0a0" stroke-width="1.1" fill="none"/><path d="M1 4.5 Q8 1.5 15.5 6.2 Q12 10.5 8 10.5 Q4 10.5 1 4.5 Z" fill="#fff"/><circle cx="8.3" cy="5.6" r="3.2" fill="#108282"/><circle cx="8.2" cy="5.4" r="1.2" fill="#001818"/><path d="M2.8 8 Q8 12 14.5 7.4" stroke="#6a6a6a" stroke-width="1.1" fill="none"/><path d="M0.5 4.4 Q4 2.3 8 2.1 Q12 2.3 15.6 6.5" stroke="#111" stroke-width="1.6" fill="none"/></svg>
<svg style="position:absolute;left:1118px;top:201px;" width="15" height="18" viewBox="0 0 15 18"><path d="M3 2.5 H12 L14.5 5 V14.5 L12.5 16.5 H2.5 L0.5 14.5 V5 Z" fill="#c0c0c0" stroke="#000" stroke-width="1"/><g shape-rendering="crispEdges"><rect x="1" y="5" width="2" height="9" fill="#f4f4f4"/><rect x="12" y="5" width="2" height="9" fill="#8c8c8c"/><rect x="2" y="14" width="11" height="2" fill="#b4b4b4"/><rect x="3" y="2" width="9" height="12" fill="#111"/><rect x="4" y="3" width="7" height="10" fill="#fff"/><path d="M5 4 H10 V6 H7 V7 H9 V9 H7 V10 H10 V12 H5 Z" fill="#0000f0"/></g></svg>
<svg style="position:absolute;left:1151px;top:201px;" width="12" height="18" viewBox="0 0 12 18"><g shape-rendering="crispEdges"><rect x="2" y="5" width="6" height="11" fill="#fff"/><g fill="#000"><rect x="4" y="2" width="1" height="1"/><rect x="6" y="2" width="1" height="1"/><rect x="1" y="3" width="9" height="2"/><rect x="0" y="3.5" width="11" height="1"/><rect x="1" y="5" width="1" height="11"/><rect x="8" y="5" width="2" height="11"/><rect x="3" y="7" width="1" height="8"/><rect x="5" y="7" width="1" height="8"/><rect x="2" y="16" width="7" height="1"/></g><rect x="5" y="2" width="1" height="1" fill="#bbb"/><rect x="7" y="5" width="1" height="10" fill="#ddd"/></g></svg>
<div style="position:absolute;left:151px;top:220px;width:1021px;height:18px;background:#ffffff;"></div>
<div style="position:absolute;left:151px;top:238px;width:1021px;height:1px;background:#008080;"></div>
<div style="position:absolute;left:183px;top:220px;width:1px;height:19px;background:#008080;"></div>
<div style="position:absolute;left:283px;top:220px;width:1px;height:19px;background:#008080;"></div>
<div style="position:absolute;left:359px;top:220px;width:1px;height:19px;background:#008080;"></div>
<div style="position:absolute;left:610px;top:220px;width:1px;height:19px;background:#008080;"></div>
<div style="position:absolute;left:637px;top:220px;width:1px;height:19px;background:#008080;"></div>
<div style="position:absolute;left:759px;top:220px;width:1px;height:19px;background:#008080;"></div>
<div style="position:absolute;left:838px;top:220px;width:1px;height:19px;background:#008080;"></div>
<div style="position:absolute;left:896px;top:220px;width:1px;height:19px;background:#008080;"></div>
<div style="position:absolute;left:958px;top:220px;width:1px;height:19px;background:#008080;"></div>
<div style="position:absolute;left:1020px;top:220px;width:1px;height:19px;background:#008080;"></div>
<div style="position:absolute;left:1076px;top:220px;width:1px;height:19px;background:#008080;"></div>
<div style="position:absolute;left:1109px;top:220px;width:1px;height:19px;background:#008080;"></div>
<div style="position:absolute;left:1140px;top:220px;width:1px;height:19px;background:#008080;"></div>
<div style="position:absolute;left:1171px;top:220px;width:1px;height:19px;background:#008080;"></div>
<div class="t" style="left:153.80px;top:222.85px;font-size:12.40px;line-height:12.40px;color:#000;transform:scaleX(0.8649);transform-origin:0 0;">3</div>
<div class="t" style="left:190.50px;top:223.85px;font-size:12.40px;line-height:12.40px;color:#000;transform:scaleX(0.8635);transform-origin:0 0;">F00003</div>
<div class="t" style="left:290.30px;top:222.85px;font-size:12.40px;line-height:12.40px;color:#000;transform:scaleX(0.8627);transform-origin:0 0;">5550003</div>
<div class="t" style="left:363.40px;top:223.25px;font-size:12.40px;line-height:12.40px;color:#0000ff;transform:scaleX(0.8844);transform-origin:0 0;text-decoration:underline;">Pineapple</div>
<div class="t" style="left:641.00px;top:221.85px;font-size:12.40px;line-height:12.40px;color:#000;transform:scaleX(0.8884);transform-origin:0 0;">World of Fruit Associ...</div>
<div class="t" style="left:763.00px;top:222.85px;font-size:12.40px;line-height:12.40px;color:#000;transform:scaleX(0.8616);transform-origin:0 0;">N/A</div>
<div class="t" style="left:886.55px;top:222.85px;font-size:12.40px;line-height:12.40px;color:#000;transform:scaleX(0.8649);transform-origin:0 0;">1</div>
<div class="t" style="left:934.07px;top:222.85px;font-size:12.40px;line-height:12.40px;color:#000;transform:scaleX(0.8637);transform-origin:0 0;">5.49</div>
<div class="t" style="left:989.82px;top:222.85px;font-size:12.40px;line-height:12.40px;color:#000;transform:scaleX(0.8622);transform-origin:0 0;">8.784</div>
<div class="t" style="left:1048.89px;top:222.85px;font-size:12.40px;line-height:12.40px;color:#000;transform:scaleX(0.8630);transform-origin:0 0;">1000</div>
<svg style="position:absolute;left:1085px;top:223px;" width="16" height="12" viewBox="0 0 16 12"><path d="M2 2 Q8 -1.5 15.5 3.2" stroke="#a0a0a0" stroke-width="1.1" fill="none"/><path d="M1 4.5 Q8 1.5 15.5 6.2 Q12 10.5 8 10.5 Q4 10.5 1 4.5 Z" fill="#fff"/><circle cx="8.3" cy="5.6" r="3.2" fill="#108282"/><circle cx="8.2" cy="5.4" r="1.2" fill="#001818"/><path d="M2.8 8 Q8 12 14.5 7.4" stroke="#6a6a6a" stroke-width="1.1" fill="none"/><path d="M0.5 4.4 Q4 2.3 8 2.1 Q12 2.3 15.6 6.5" stroke="#111" stroke-width="1.6" fill="none"/></svg>
<svg style="position:absolute;left:1118px;top:220px;" width="15" height="18" viewBox="0 0 15 18"><path d="M3 2.5 H12 L14.5 5 V14.5 L12.5 16.5 H2.5 L0.5 14.5 V5 Z" fill="#c0c0c0" stroke="#000" stroke-width="1"/><g shape-rendering="crispEdges"><rect x="1" y="5" width="2" height="9" fill="#f4f4f4"/><rect x="12" y="5" width="2" height="9" fill="#8c8c8c"/><rect x="2" y="14" width="11" height="2" fill="#b4b4b4"/><rect x="3" y="2" width="9" height="12" fill="#111"/><rect x="4" y="3" width="7" height="10" fill="#fff"/><path d="M5 4 H10 V6 H7 V7 H9 V9 H7 V10 H10 V12 H5 Z" fill="#0000f0"/></g></svg>
<svg style="position:absolute;left:1151px;top:220px;" width="12" height="18" viewBox="0 0 12 18"><g shape-rendering="crispEdges"><rect x="2" y="5" width="6" height="11" fill="#fff"/><g fill="#000"><rect x="4" y="2" width="1" height="1"/><rect x="6" y="2" width="1" height="1"/><rect x="1" y="3" width="9" height="2"/><rect x="0" y="3.5" width="11" height="1"/><rect x="1" y="5" width="1" height="11"/><rect x="8" y="5" width="2" height="11"/><rect x="3" y="7" width="1" height="8"/><rect x="5" y="7" width="1" height="8"/><rect x="2" y="16" width="7" height="1"/></g><rect x="5" y="2" width="1" height="1" fill="#bbb"/><rect x="7" y="5" width="1" height="10" fill="#ddd"/></g></svg>
<div style="position:absolute;left:151px;top:239px;width:1021px;height:18px;background:#cce8e8;"></div>
<div style="position:absolute;left:151px;top:257px;width:1021px;height:1px;background:#008080;"></div>
<div style="position:absolute;left:183px;top:239px;width:1px;height:19px;background:#008080;"></div>
<div style="position:absolute;left:283px;top:239px;width:1px;height:19px;background:#008080;"></div>
<div style="position:absolute;left:359px;top:239px;width:1px;height:19px;background:#008080;"></div>
<div style="position:absolute;left:610px;top:239px;width:1px;height:19px;background:#008080;"></div>
<div style="position:absolute;left:637px;top:239px;width:1px;height:19px;background:#008080;"></div>
<div style="position:absolute;left:759px;top:239px;width:1px;height:19px;background:#008080;"></div>
<div style="position:absolute;left:838px;top:239px;width:1px;height:19px;background:#008080;"></div>
<div style="position:absolute;left:896px;top:239px;width:1px;height:19px;background:#008080;"></div>
<div style="position:absolute;left:958px;top:239px;width:1px;height:19px;background:#008080;"></div>
<div style="position:absolute;left:1020px;top:239px;width:1px;height:19px;background:#008080;"></div>
<div style="position:absolute;left:1076px;top:239px;width:1px;height:19px;background:#008080;"></div>
<div style="position:absolute;left:1109px;top:239px;width:1px;height:19px;background:#008080;"></div>
<div style="position:absolute;left:1140px;top:239px;width:1px;height:19px;background:#008080;"></div>
<div style="position:absolute;left:1171px;top:239px;width:1px;height:19px;background:#008080;"></div>
<div class="t" style="left:153.80px;top:241.85px;font-size:12.40px;line-height:12.40px;color:#000;transform:scaleX(0.8649);transform-origin:0 0;">4</div>
<div class="t" style="left:190.50px;top:242.85px;font-size:12.40px;line-height:12.40px;color:#000;transform:scaleX(0.8635);transform-origin:0 0;">F00004</div>
<div class="t" style="left:290.30px;top:241.85px;font-size:12.40px;line-height:12.40px;color:#000;transform:scaleX(0.8627);transform-origin:0 0;">5550004</div>
<div class="t" style="left:363.40px;top:242.25px;font-size:12.40px;line-height:12.40px;color:#0000ff;transform:scaleX(0.8555);transform-origin:0 0;text-decoration:underline;">Banana</div>
<div class="t" style="left:641.00px;top:240.85px;font-size:12.40px;line-height:12.40px;color:#000;transform:scaleX(0.8884);transform-origin:0 0;">World of Fruit Associ...</div>
<div class="t" style="left:763.00px;top:241.85px;font-size:12.40px;line-height:12.40px;color:#000;transform:scaleX(0.8616);transform-origin:0 0;">N/A</div>
<div class="t" style="left:886.55px;top:241.85px;font-size:12.40px;line-height:12.40px;color:#000;transform:scaleX(0.8649);transform-origin:0 0;">1</div>
<div class="t" style="left:934.07px;top:241.85px;font-size:12.40px;line-height:12.40px;color:#000;transform:scaleX(0.8637);transform-origin:0 0;">3.00</div>
<div class="t" style="left:995.77px;top:241.85px;font-size:12.40px;line-height:12.40px;color:#000;transform:scaleX(0.8637);transform-origin:0 0;">4.00</div>
<div class="t" style="left:1054.84px;top:241.85px;font-size:12.40px;line-height:12.40px;color:#000;transform:scaleX(0.8623);transform-origin:0 0;">996</div>
<svg style="position:absolute;left:1085px;top:242px;" width="16" height="12" viewBox="0 0 16 12"><path d="M2 2 Q8 -1.5 15.5 3.2" stroke="#a0a0a0" stroke-width="1.1" fill="none"/><path d="M1 4.5 Q8 1.5 15.5 6.2 Q12 10.5 8 10.5 Q4 10.5 1 4.5 Z" fill="#fff"/><circle cx="8.3" cy="5.6" r="3.2" fill="#108282"/><circle cx="8.2" cy="5.4" r="1.2" fill="#001818"/><path d="M2.8 8 Q8 12 14.5 7.4" stroke="#6a6a6a" stroke-width="1.1" fill="none"/><path d="M0.5 4.4 Q4 2.3 8 2.1 Q12 2.3 15.6 6.5" stroke="#111" stroke-width="1.6" fill="none"/></svg>
<svg style="position:absolute;left:1118px;top:239px;" width="15" height="18" viewBox="0 0 15 18"><path d="M3 2.5 H12 L14.5 5 V14.5 L12.5 16.5 H2.5 L0.5 14.5 V5 Z" fill="#c0c0c0" stroke="#000" stroke-width="1"/><g shape-rendering="crispEdges"><rect x="1" y="5" width="2" height="9" fill="#f4f4f4"/><rect x="12" y="5" width="2" height="9" fill="#8c8c8c"/><rect x="2" y="14" width="11" height="2" fill="#b4b4b4"/><rect x="3" y="2" width="9" height="12" fill="#111"/><rect x="4" y="3" width="7" height="10" fill="#fff"/><path d="M5 4 H10 V6 H7 V7 H9 V9 H7 V10 H10 V12 H5 Z" fill="#0000f0"/></g></svg>
<svg style="position:absolute;left:1151px;top:239px;" width="12" height="18" viewBox="0 0 12 18"><g shape-rendering="crispEdges"><rect x="2" y="5" width="6" height="11" fill="#fff"/><g fill="#000"><rect x="4" y="2" width="1" height="1"/><rect x="6" y="2" width="1" height="1"/><rect x="1" y="3" width="9" height="2"/><rect x="0" y="3.5" width="11" height="1"/><rect x="1" y="5" width="1" height="11"/><rect x="8" y="5" width="2" height="11"/><rect x="3" y="7" width="1" height="8"/><rect x="5" y="7" width="1" height="8"/><rect x="2" y="16" width="7" height="1"/></g><rect x="5" y="2" width="1" height="1" fill="#bbb"/><rect x="7" y="5" width="1" height="10" fill="#ddd"/></g></svg>
<div style="position:absolute;left:151px;top:258px;width:1021px;height:18px;background:#ffffff;"></div>
<div style="position:absolute;left:151px;top:276px;width:1021px;height:1px;background:#008080;"></div>
<div style="position:absolute;left:183px;top:258px;width:1px;height:19px;background:#008080;"></div>
<div style="position:absolute;left:283px;top:258px;width:1px;height:19px;background:#008080;"></div>
<div style="position:absolute;left:359px;top:258px;width:1px;height:19px;background:#008080;"></div>
<div style="position:absolute;left:610px;top:258px;width:1px;height:19px;background:#008080;"></div>
<div style="position:absolute;left:637px;top:258px;width:1px;height:19px;background:#008080;"></div>
<div style="position:absolute;left:759px;top:258px;width:1px;height:19px;background:#008080;"></div>
<div style="position:absolute;left:838px;top:258px;width:1px;height:19px;background:#008080;"></div>
<div style="position:absolute;left:896px;top:258px;width:1px;height:19px;background:#008080;"></div>
<div style="position:absolute;left:958px;top:258px;width:1px;height:19px;background:#008080;"></div>
<div style="position:absolute;left:1020px;top:258px;width:1px;height:19px;background:#008080;"></div>
<div style="position:absolute;left:1076px;top:258px;width:1px;height:19px;background:#008080;"></div>
<div style="position:absolute;left:1109px;top:258px;width:1px;height:19px;background:#008080;"></div>
<div style="position:absolute;left:1140px;top:258px;width:1px;height:19px;background:#008080;"></div>
<div style="position:absolute;left:1171px;top:258px;width:1px;height:19px;background:#008080;"></div>
<div class="t" style="left:153.80px;top:260.85px;font-size:12.40px;line-height:12.40px;color:#000;transform:scaleX(0.8649);transform-origin:0 0;">5</div>
<div class="t" style="left:190.50px;top:261.85px;font-size:12.40px;line-height:12.40px;color:#000;transform:scaleX(0.8635);transform-origin:0 0;">F00005</div>
<div class="t" style="left:290.30px;top:260.85px;font-size:12.40px;line-height:12.40px;color:#000;transform:scaleX(0.8627);transform-origin:0 0;">5550005</div>
<div class="t" style="left:363.40px;top:261.25px;font-size:12.40px;line-height:12.40px;color:#0000ff;transform:scaleX(0.8851);transform-origin:0 0;text-decoration:underline;">Grapes</div>
<div class="t" style="left:641.00px;top:259.85px;font-size:12.40px;line-height:12.40px;color:#000;transform:scaleX(0.8884);transform-origin:0 0;">World of Fruit Associ...</div>
<div class="t" style="left:763.00px;top:260.85px;font-size:12.40px;line-height:12.40px;color:#000;transform:scaleX(0.8616);transform-origin:0 0;">N/A</div>
<div class="t" style="left:886.55px;top:260.85px;font-size:12.40px;line-height:12.40px;color:#000;transform:scaleX(0.8649);transform-origin:0 0;">1</div>
<div class="t" style="left:934.07px;top:260.85px;font-size:12.40px;line-height:12.40px;color:#000;transform:scaleX(0.8637);transform-origin:0 0;">3.00</div>
<div class="t" style="left:995.77px;top:260.85px;font-size:12.40px;line-height:12.40px;color:#000;transform:scaleX(0.8637);transform-origin:0 0;">4.00</div>
<div class="t" style="left:1054.84px;top:260.85px;font-size:12.40px;line-height:12.40px;color:#000;transform:scaleX(0.8623);transform-origin:0 0;">998</div>
<svg style="position:absolute;left:1085px;top:261px;" width="16" height="12" viewBox="0 0 16 12"><path d="M2 2 Q8 -1.5 15.5 3.2" stroke="#a0a0a0" stroke-width="1.1" fill="none"/><path d="M1 4.5 Q8 1.5 15.5 6.2 Q12 10.5 8 10.5 Q4 10.5 1 4.5 Z" fill="#fff"/><circle cx="8.3" cy="5.6" r="3.2" fill="#108282"/><circle cx="8.2" cy="5.4" r="1.2" fill="#001818"/><path d="M2.8 8 Q8 12 14.5 7.4" stroke="#6a6a6a" stroke-width="1.1" fill="none"/><path d="M0.5 4.4 Q4 2.3 8 2.1 Q12 2.3 15.6 6.5" stroke="#111" stroke-width="1.6" fill="none"/></svg>
<svg style="position:absolute;left:1118px;top:258px;" width="15" height="18" viewBox="0 0 15 18"><path d="M3 2.5 H12 L14.5 5 V14.5 L12.5 16.5 H2.5 L0.5 14.5 V5 Z" fill="#c0c0c0" stroke="#000" stroke-width="1"/><g shape-rendering="crispEdges"><rect x="1" y="5" width="2" height="9" fill="#f4f4f4"/><rect x="12" y="5" width="2" height="9" fill="#8c8c8c"/><rect x="2" y="14" width="11" height="2" fill="#b4b4b4"/><rect x="3" y="2" width="9" height="12" fill="#111"/><rect x="4" y="3" width="7" height="10" fill="#fff"/><path d="M5 4 H10 V6 H7 V7 H9 V9 H7 V10 H10 V12 H5 Z" fill="#0000f0"/></g></svg>
<svg style="position:absolute;left:1151px;top:258px;" width="12" height="18" viewBox="0 0 12 18"><g shape-rendering="crispEdges"><rect x="2" y="5" width="6" height="11" fill="#fff"/><g fill="#000"><rect x="4" y="2" width="1" height="1"/><rect x="6" y="2" width="1" height="1"/><rect x="1" y="3" width="9" height="2"/><rect x="0" y="3.5" width="11" height="1"/><rect x="1" y="5" width="1" height="11"/><rect x="8" y="5" width="2" height="11"/><rect x="3" y="7" width="1" height="8"/><rect x="5" y="7" width="1" height="8"/><rect x="2" y="16" width="7" height="1"/></g><rect x="5" y="2" width="1" height="1" fill="#bbb"/><rect x="7" y="5" width="1" height="10" fill="#ddd"/></g></svg>
<div style="position:absolute;left:151px;top:277px;width:1021px;height:18px;background:#cce8e8;"></div>
<div style="position:absolute;left:151px;top:295px;width:1021px;height:1px;background:#008080;"></div>
<div style="position:absolute;left:183px;top:277px;width:1px;height:19px;background:#008080;"></div>
<div style="position:absolute;left:283px;top:277px;width:1px;height:19px;background:#008080;"></div>
<div style="position:absolute;left:359px;top:277px;width:1px;height:19px;background:#008080;"></div>
<div style="position:absolute;left:610px;top:277px;width:1px;height:19px;background:#008080;"></div>
<div style="position:absolute;left:637px;top:277px;width:1px;height:19px;background:#008080;"></div>
<div style="position:absolute;left:759px;top:277px;width:1px;height:19px;background:#008080;"></div>
<div style="position:absolute;left:838px;top:277px;width:1px;height:19px;background:#008080;"></div>
<div style="position:absolute;left:896px;top:277px;width:1px;height:19px;background:#008080;"></div>
<div style="position:absolute;left:958px;top:277px;width:1px;height:19px;background:#008080;"></div>
<div style="position:absolute;left:1020px;top:277px;width:1px;height:19px;background:#008080;"></div>
<div style="position:absolute;left:1076px;top:277px;width:1px;height:19px;background:#008080;"></div>
<div style="position:absolute;left:1109px;top:277px;width:1px;height:19px;background:#008080;"></div>
<div style="position:absolute;left:1140px;top:277px;width:1px;height:19px;background:#008080;"></div>
<div style="position:absolute;left:1171px;top:277px;width:1px;height:19px;background:#008080;"></div>
<div class="t" style="left:153.80px;top:279.85px;font-size:12.40px;line-height:12.40px;color:#000;transform:scaleX(0.8649);transform-origin:0 0;">6</div>
<div class="t" style="left:190.50px;top:280.85px;font-size:12.40px;line-height:12.40px;color:#000;transform:scaleX(0.8635);transform-origin:0 0;">F00006</div>
<div class="t" style="left:290.30px;top:279.85px;font-size:12.40px;line-height:12.40px;color:#000;transform:scaleX(0.8627);transform-origin:0 0;">5550006</div>
<div class="t" style="left:363.40px;top:280.25px;font-size:12.40px;line-height:12.40px;color:#0000ff;transform:scaleX(0.8999);transform-origin:0 0;text-decoration:underline;">Tomato</div>
<div class="t" style="left:641.00px;top:278.85px;font-size:12.40px;line-height:12.40px;color:#000;transform:scaleX(0.8884);transform-origin:0 0;">World of Fruit Associ...</div>
<div class="t" style="left:763.00px;top:279.85px;font-size:12.40px;line-height:12.40px;color:#000;transform:scaleX(0.8616);transform-origin:0 0;">N/A</div>
<div class="t" style="left:886.55px;top:279.85px;font-size:12.40px;line-height:12.40px;color:#000;transform:scaleX(0.8649);transform-origin:0 0;">1</div>
<div class="t" style="left:934.07px;top:279.85px;font-size:12.40px;line-height:12.40px;color:#000;transform:scaleX(0.8637);transform-origin:0 0;">3.00</div>
<div class="t" style="left:995.77px;top:279.85px;font-size:12.40px;line-height:12.40px;color:#000;transform:scaleX(0.8637);transform-origin:0 0;">4.00</div>
<div class="t" style="left:1048.89px;top:279.85px;font-size:12.40px;line-height:12.40px;color:#000;transform:scaleX(0.8630);transform-origin:0 0;">1000</div>
<svg style="position:absolute;left:1085px;top:280px;" width="16" height="12" viewBox="0 0 16 12"><path d="M2 2 Q8 -1.5 15.5 3.2" stroke="#a0a0a0" stroke-width="1.1" fill="none"/><path d="M1 4.5 Q8 1.5 15.5 6.2 Q12 10.5 8 10.5 Q4 10.5 1 4.5 Z" fill="#fff"/><circle cx="8.3" cy="5.6" r="3.2" fill="#108282"/><circle cx="8.2" cy="5.4" r="1.2" fill="#001818"/><path d="M2.8 8 Q8 12 14.5 7.4" stroke="#6a6a6a" stroke-width="1.1" fill="none"/><path d="M0.5 4.4 Q4 2.3 8 2.1 Q12 2.3 15.6 6.5" stroke="#111" stroke-width="1.6" fill="none"/></svg>
<svg style="position:absolute;left:1118px;top:277px;" width="15" height="18" viewBox="0 0 15 18"><path d="M3 2.5 H12 L14.5 5 V14.5 L12.5 16.5 H2.5 L0.5 14.5 V5 Z" fill="#c0c0c0" stroke="#000" stroke-width="1"/><g shape-rendering="crispEdges"><rect x="1" y="5" width="2" height="9" fill="#f4f4f4"/><rect x="12" y="5" width="2" height="9" fill="#8c8c8c"/><rect x="2" y="14" width="11" height="2" fill="#b4b4b4"/><rect x="3" y="2" width="9" height="12" fill="#111"/><rect x="4" y="3" width="7" height="10" fill="#fff"/><path d="M5 4 H10 V6 H7 V7 H9 V9 H7 V10 H10 V12 H5 Z" fill="#0000f0"/></g></svg>
<svg style="position:absolute;left:1151px;top:277px;" width="12" height="18" viewBox="0 0 12 18"><g shape-rendering="crispEdges"><rect x="2" y="5" width="6" height="11" fill="#fff"/><g fill="#000"><rect x="4" y="2" width="1" height="1"/><rect x="6" y="2" width="1" height="1"/><rect x="1" y="3" width="9" height="2"/><rect x="0" y="3.5" width="11" height="1"/><rect x="1" y="5" width="1" height="11"/><rect x="8" y="5" width="2" height="11"/><rect x="3" y="7" width="1" height="8"/><rect x="5" y="7" width="1" height="8"/><rect x="2" y="16" width="7" height="1"/></g><rect x="5" y="2" width="1" height="1" fill="#bbb"/><rect x="7" y="5" width="1" height="10" fill="#ddd"/></g></svg>
<div style="position:absolute;left:151px;top:296px;width:1021px;height:18px;background:#ffffff;"></div>
<div style="position:absolute;left:151px;top:314px;width:1021px;height:1px;background:#008080;"></div>
<div style="position:absolute;left:183px;top:296px;width:1px;height:19px;background:#008080;"></div>
<div style="position:absolute;left:283px;top:296px;width:1px;height:19px;background:#008080;"></div>
<div style="position:absolute;left:359px;top:296px;width:1px;height:19px;background:#008080;"></div>
<div style="position:absolute;left:610px;top:296px;width:1px;height:19px;background:#008080;"></div>
<div style="position:absolute;left:637px;top:296px;width:1px;height:19px;background:#008080;"></div>
<div style="position:absolute;left:759px;top:296px;width:1px;height:19px;background:#008080;"></div>
<div style="position:absolute;left:838px;top:296px;width:1px;height:19px;background:#008080;"></div>
<div style="position:absolute;left:896px;top:296px;width:1px;height:19px;background:#008080;"></div>
<div style="position:absolute;left:958px;top:296px;width:1px;height:19px;background:#008080;"></div>
<div style="position:absolute;left:1020px;top:296px;width:1px;height:19px;background:#008080;"></div>
<div style="position:absolute;left:1076px;top:296px;width:1px;height:19px;background:#008080;"></div>
<div style="position:absolute;left:1109px;top:296px;width:1px;height:19px;background:#008080;"></div>
<div style="position:absolute;left:1140px;top:296px;width:1px;height:19px;background:#008080;"></div>
<div style="position:absolute;left:1171px;top:296px;width:1px;height:19px;background:#008080;"></div>
<div class="t" style="left:153.80px;top:298.85px;font-size:12.40px;line-height:12.40px;color:#000;transform:scaleX(0.8649);transform-origin:0 0;">7</div>
<div class="t" style="left:190.50px;top:299.85px;font-size:12.40px;line-height:12.40px;color:#000;transform:scaleX(0.8635);transform-origin:0 0;">F00007</div>
<div class="t" style="left:290.30px;top:298.85px;font-size:12.40px;line-height:12.40px;color:#000;transform:scaleX(0.8627);transform-origin:0 0;">5550007</div>
<div class="t" style="left:363.40px;top:299.25px;font-size:12.40px;line-height:12.40px;color:#0000ff;transform:scaleX(0.8539);transform-origin:0 0;text-decoration:underline;">Lemon</div>
<div class="t" style="left:641.00px;top:297.85px;font-size:12.40px;line-height:12.40px;color:#000;transform:scaleX(0.8884);transform-origin:0 0;">World of Fruit Associ...</div>
<div class="t" style="left:763.00px;top:298.85px;font-size:12.40px;line-height:12.40px;color:#000;transform:scaleX(0.8616);transform-origin:0 0;">N/A</div>
<div class="t" style="left:886.55px;top:298.85px;font-size:12.40px;line-height:12.40px;color:#000;transform:scaleX(0.8649);transform-origin:0 0;">1</div>
<div class="t" style="left:934.07px;top:298.85px;font-size:12.40px;line-height:12.40px;color:#000;transform:scaleX(0.8637);transform-origin:0 0;">3.00</div>
<div class="t" style="left:995.77px;top:298.85px;font-size:12.40px;line-height:12.40px;color:#000;transform:scaleX(0.8637);transform-origin:0 0;">4.00</div>
<div class="t" style="left:1048.89px;top:298.85px;font-size:12.40px;line-height:12.40px;color:#000;transform:scaleX(0.8630);transform-origin:0 0;">1000</div>
<svg style="position:absolute;left:1085px;top:299px;" width="16" height="12" viewBox="0 0 16 12"><path d="M2 2 Q8 -1.5 15.5 3.2" stroke="#a0a0a0" stroke-width="1.1" fill="none"/><path d="M1 4.5 Q8 1.5 15.5 6.2 Q12 10.5 8 10.5 Q4 10.5 1 4.5 Z" fill="#fff"/><circle cx="8.3" cy="5.6" r="3.2" fill="#108282"/><circle cx="8.2" cy="5.4" r="1.2" fill="#001818"/><path d="M2.8 8 Q8 12 14.5 7.4" stroke="#6a6a6a" stroke-width="1.1" fill="none"/><path d="M0.5 4.4 Q4 2.3 8 2.1 Q12 2.3 15.6 6.5" stroke="#111" stroke-width="1.6" fill="none"/></svg>
<svg style="position:absolute;left:1118px;top:296px;" width="15" height="18" viewBox="0 0 15 18"><path d="M3 2.5 H12 L14.5 5 V14.5 L12.5 16.5 H2.5 L0.5 14.5 V5 Z" fill="#c0c0c0" stroke="#000" stroke-width="1"/><g shape-rendering="crispEdges"><rect x="1" y="5" width="2" height="9" fill="#f4f4f4"/><rect x="12" y="5" width="2" height="9" fill="#8c8c8c"/><rect x="2" y="14" width="11" height="2" fill="#b4b4b4"/><rect x="3" y="2" width="9" height="12" fill="#111"/><rect x="4" y="3" width="7" height="10" fill="#fff"/><path d="M5 4 H10 V6 H7 V7 H9 V9 H7 V10 H10 V12 H5 Z" fill="#0000f0"/></g></svg>
<svg style="position:absolute;left:1151px;top:296px;" width="12" height="18" viewBox="0 0 12 18"><g shape-rendering="crispEdges"><rect x="2" y="5" width="6" height="11" fill="#fff"/><g fill="#000"><rect x="4" y="2" width="1" height="1"/><rect x="6" y="2" width="1" height="1"/><rect x="1" y="3" width="9" height="2"/><rect x="0" y="3.5" width="11" height="1"/><rect x="1" y="5" width="1" height="11"/><rect x="8" y="5" width="2" height="11"/><rect x="3" y="7" width="1" height="8"/><rect x="5" y="7" width="1" height="8"/><rect x="2" y="16" width="7" height="1"/></g><rect x="5" y="2" width="1" height="1" fill="#bbb"/><rect x="7" y="5" width="1" height="10" fill="#ddd"/></g></svg>
<div style="position:absolute;left:151px;top:315px;width:1021px;height:18px;background:#cce8e8;"></div>
<div style="position:absolute;left:151px;top:333px;width:1021px;height:1px;background:#008080;"></div>
<div style="position:absolute;left:183px;top:315px;width:1px;height:19px;background:#008080;"></div>
<div style="position:absolute;left:283px;top:315px;width:1px;height:19px;background:#008080;"></div>
<div style="position:absolute;left:359px;top:315px;width:1px;height:19px;background:#008080;"></div>
<div style="position:absolute;left:610px;top:315px;width:1px;height:19px;background:#008080;"></div>
<div style="position:absolute;left:637px;top:315px;width:1px;height:19px;background:#008080;"></div>
<div style="position:absolute;left:759px;top:315px;width:1px;height:19px;background:#008080;"></div>
<div style="position:absolute;left:838px;top:315px;width:1px;height:19px;background:#008080;"></div>
<div style="position:absolute;left:896px;top:315px;width:1px;height:19px;background:#008080;"></div>
<div style="position:absolute;left:958px;top:315px;width:1px;height:19px;background:#008080;"></div>
<div style="position:absolute;left:1020px;top:315px;width:1px;height:19px;background:#008080;"></div>
<div style="position:absolute;left:1076px;top:315px;width:1px;height:19px;background:#008080;"></div>
<div style="position:absolute;left:1109px;top:315px;width:1px;height:19px;background:#008080;"></div>
<div style="position:absolute;left:1140px;top:315px;width:1px;height:19px;background:#008080;"></div>
<div style="position:absolute;left:1171px;top:315px;width:1px;height:19px;background:#008080;"></div>
<div class="t" style="left:153.80px;top:317.85px;font-size:12.40px;line-height:12.40px;color:#000;transform:scaleX(0.8649);transform-origin:0 0;">8</div>
<div class="t" style="left:190.50px;top:318.85px;font-size:12.40px;line-height:12.40px;color:#000;transform:scaleX(0.8635);transform-origin:0 0;">F00008</div>
<div class="t" style="left:290.30px;top:317.85px;font-size:12.40px;line-height:12.40px;color:#000;transform:scaleX(0.8627);transform-origin:0 0;">5550008</div>
<div class="t" style="left:363.40px;top:318.25px;font-size:12.40px;line-height:12.40px;color:#0000ff;transform:scaleX(0.8840);transform-origin:0 0;text-decoration:underline;">Watermelon</div>
<div class="t" style="left:641.00px;top:316.85px;font-size:12.40px;line-height:12.40px;color:#000;transform:scaleX(0.8884);transform-origin:0 0;">World of Fruit Associ...</div>
<div class="t" style="left:763.00px;top:317.85px;font-size:12.40px;line-height:12.40px;color:#000;transform:scaleX(0.8616);transform-origin:0 0;">N/A</div>
<div class="t" style="left:886.55px;top:317.85px;font-size:12.40px;line-height:12.40px;color:#000;transform:scaleX(0.8649);transform-origin:0 0;">1</div>
<div class="t" style="left:934.07px;top:317.85px;font-size:12.40px;line-height:12.40px;color:#000;transform:scaleX(0.8637);transform-origin:0 0;">3.00</div>
<div class="t" style="left:995.77px;top:317.85px;font-size:12.40px;line-height:12.40px;color:#000;transform:scaleX(0.8637);transform-origin:0 0;">4.00</div>
<div class="t" style="left:1048.89px;top:317.85px;font-size:12.40px;line-height:12.40px;color:#000;transform:scaleX(0.8630);transform-origin:0 0;">1000</div>
<svg style="position:absolute;left:1085px;top:318px;" width="16" height="12" viewBox="0 0 16 12"><path d="M2 2 Q8 -1.5 15.5 3.2" stroke="#a0a0a0" stroke-width="1.1" fill="none"/><path d="M1 4.5 Q8 1.5 15.5 6.2 Q12 10.5 8 10.5 Q4 10.5 1 4.5 Z" fill="#fff"/><circle cx="8.3" cy="5.6" r="3.2" fill="#108282"/><circle cx="8.2" cy="5.4" r="1.2" fill="#001818"/><path d="M2.8 8 Q8 12 14.5 7.4" stroke="#6a6a6a" stroke-width="1.1" fill="none"/><path d="M0.5 4.4 Q4 2.3 8 2.1 Q12 2.3 15.6 6.5" stroke="#111" stroke-width="1.6" fill="none"/></svg>
<svg style="position:absolute;left:1118px;top:315px;" width="15" height="18" viewBox="0 0 15 18"><path d="M3 2.5 H12 L14.5 5 V14.5 L12.5 16.5 H2.5 L0.5 14.5 V5 Z" fill="#c0c0c0" stroke="#000" stroke-width="1"/><g shape-rendering="crispEdges"><rect x="1" y="5" width="2" height="9" fill="#f4f4f4"/><rect x="12" y="5" width="2" height="9" fill="#8c8c8c"/><rect x="2" y="14" width="11" height="2" fill="#b4b4b4"/><rect x="3" y="2" width="9" height="12" fill="#111"/><rect x="4" y="3" width="7" height="10" fill="#fff"/><path d="M5 4 H10 V6 H7 V7 H9 V9 H7 V10 H10 V12 H5 Z" fill="#0000f0"/></g></svg>
<svg style="position:absolute;left:1151px;top:315px;" width="12" height="18" viewBox="0 0 12 18"><g shape-rendering="crispEdges"><rect x="2" y="5" width="6" height="11" fill="#fff"/><g fill="#000"><rect x="4" y="2" width="1" height="1"/><rect x="6" y="2" width="1" height="1"/><rect x="1" y="3" width="9" height="2"/><rect x="0" y="3.5" width="11" height="1"/><rect x="1" y="5" width="1" height="11"/><rect x="8" y="5" width="2" height="11"/><rect x="3" y="7" width="1" height="8"/><rect x="5" y="7" width="1" height="8"/><rect x="2" y="16" width="7" height="1"/></g><rect x="5" y="2" width="1" height="1" fill="#bbb"/><rect x="7" y="5" width="1" height="10" fill="#ddd"/></g></svg>
<div style="position:absolute;left:151px;top:334px;width:1021px;height:18px;background:#ffffff;"></div>
<div style="position:absolute;left:151px;top:352px;width:1021px;height:1px;background:#008080;"></div>
<div style="position:absolute;left:183px;top:334px;width:1px;height:19px;background:#008080;"></div>
<div style="position:absolute;left:283px;top:334px;width:1px;height:19px;background:#008080;"></div>
<div style="position:absolute;left:359px;top:334px;width:1px;height:19px;background:#008080;"></div>
<div style="position:absolute;left:610px;top:334px;width:1px;height:19px;background:#008080;"></div>
<div style="position:absolute;left:637px;top:334px;width:1px;height:19px;background:#008080;"></div>
<div style="position:absolute;left:759px;top:334px;width:1px;height:19px;background:#008080;"></div>
<div style="position:absolute;left:838px;top:334px;width:1px;height:19px;background:#008080;"></div>
<div style="position:absolute;left:896px;top:334px;width:1px;height:19px;background:#008080;"></div>
<div style="position:absolute;left:958px;top:334px;width:1px;height:19px;background:#008080;"></div>
<div style="position:absolute;left:1020px;top:334px;width:1px;height:19px;background:#008080;"></div>
<div style="position:absolute;left:1076px;top:334px;width:1px;height:19px;background:#008080;"></div>
<div style="position:absolute;left:1109px;top:334px;width:1px;height:19px;background:#008080;"></div>
<div style="position:absolute;left:1140px;top:334px;width:1px;height:19px;background:#008080;"></div>
<div style="position:absolute;left:1171px;top:334px;width:1px;height:19px;background:#008080;"></div>
<div class="t" style="left:153.80px;top:336.85px;font-size:12.40px;line-height:12.40px;color:#000;transform:scaleX(0.8649);transform-origin:0 0;">9</div>
<div class="t" style="left:190.50px;top:337.85px;font-size:12.40px;line-height:12.40px;color:#000;transform:scaleX(0.8635);transform-origin:0 0;">F00009</div>
<div class="t" style="left:290.30px;top:336.85px;font-size:12.40px;line-height:12.40px;color:#000;transform:scaleX(0.8627);transform-origin:0 0;">5550009</div>
<div class="t" style="left:363.40px;top:337.25px;font-size:12.40px;line-height:12.40px;color:#0000ff;transform:scaleX(0.8790);transform-origin:0 0;text-decoration:underline;">Melon</div>
<div class="t" style="left:641.00px;top:335.85px;font-size:12.40px;line-height:12.40px;color:#000;transform:scaleX(0.8884);transform-origin:0 0;">World of Fruit Associ...</div>
<div class="t" style="left:763.00px;top:336.85px;font-size:12.40px;line-height:12.40px;color:#000;transform:scaleX(0.8616);transform-origin:0 0;">N/A</div>
<div class="t" style="left:886.55px;top:336.85px;font-size:12.40px;line-height:12.40px;color:#000;transform:scaleX(0.8649);transform-origin:0 0;">1</div>
<div class="t" style="left:934.07px;top:336.85px;font-size:12.40px;line-height:12.40px;color:#000;transform:scaleX(0.8637);transform-origin:0 0;">3.00</div>
<div class="t" style="left:995.77px;top:336.85px;font-size:12.40px;line-height:12.40px;color:#000;transform:scaleX(0.8637);transform-origin:0 0;">4.00</div>
<div class="t" style="left:1048.89px;top:336.85px;font-size:12.40px;line-height:12.40px;color:#000;transform:scaleX(0.8630);transform-origin:0 0;">1000</div>
<svg style="position:absolute;left:1085px;top:337px;" width="16" height="12" viewBox="0 0 16 12"><path d="M2 2 Q8 -1.5 15.5 3.2" stroke="#a0a0a0" stroke-width="1.1" fill="none"/><path d="M1 4.5 Q8 1.5 15.5 6.2 Q12 10.5 8 10.5 Q4 10.5 1 4.5 Z" fill="#fff"/><circle cx="8.3" cy="5.6" r="3.2" fill="#108282"/><circle cx="8.2" cy="5.4" r="1.2" fill="#001818"/><path d="M2.8 8 Q8 12 14.5 7.4" stroke="#6a6a6a" stroke-width="1.1" fill="none"/><path d="M0.5 4.4 Q4 2.3 8 2.1 Q12 2.3 15.6 6.5" stroke="#111" stroke-width="1.6" fill="none"/></svg>
<svg style="position:absolute;left:1118px;top:334px;" width="15" height="18" viewBox="0 0 15 18"><path d="M3 2.5 H12 L14.5 5 V14.5 L12.5 16.5 H2.5 L0.5 14.5 V5 Z" fill="#c0c0c0" stroke="#000" stroke-width="1"/><g shape-rendering="crispEdges"><rect x="1" y="5" width="2" height="9" fill="#f4f4f4"/><rect x="12" y="5" width="2" height="9" fill="#8c8c8c"/><rect x="2" y="14" width="11" height="2" fill="#b4b4b4"/><rect x="3" y="2" width="9" height="12" fill="#111"/><rect x="4" y="3" width="7" height="10" fill="#fff"/><path d="M5 4 H10 V6 H7 V7 H9 V9 H7 V10 H10 V12 H5 Z" fill="#0000f0"/></g></svg>
<svg style="position:absolute;left:1151px;top:334px;" width="12" height="18" viewBox="0 0 12 18"><g shape-rendering="crispEdges"><rect x="2" y="5" width="6" height="11" fill="#fff"/><g fill="#000"><rect x="4" y="2" width="1" height="1"/><rect x="6" y="2" width="1" height="1"/><rect x="1" y="3" width="9" height="2"/><rect x="0" y="3.5" width="11" height="1"/><rect x="1" y="5" width="1" height="11"/><rect x="8" y="5" width="2" height="11"/><rect x="3" y="7" width="1" height="8"/><rect x="5" y="7" width="1" height="8"/><rect x="2" y="16" width="7" height="1"/></g><rect x="5" y="2" width="1" height="1" fill="#bbb"/><rect x="7" y="5" width="1" height="10" fill="#ddd"/></g></svg>
<div style="position:absolute;left:151px;top:353px;width:1021px;height:18px;background:#cce8e8;"></div>
<div style="position:absolute;left:151px;top:371px;width:1021px;height:1px;background:#008080;"></div>
<div style="position:absolute;left:183px;top:353px;width:1px;height:19px;background:#008080;"></div>
<div style="position:absolute;left:283px;top:353px;width:1px;height:19px;background:#008080;"></div>
<div style="position:absolute;left:359px;top:353px;width:1px;height:19px;background:#008080;"></div>
<div style="position:absolute;left:610px;top:353px;width:1px;height:19px;background:#008080;"></div>
<div style="position:absolute;left:637px;top:353px;width:1px;height:19px;background:#008080;"></div>
<div style="position:absolute;left:759px;top:353px;width:1px;height:19px;background:#008080;"></div>
<div style="position:absolute;left:838px;top:353px;width:1px;height:19px;background:#008080;"></div>
<div style="position:absolute;left:896px;top:353px;width:1px;height:19px;background:#008080;"></div>
<div style="position:absolute;left:958px;top:353px;width:1px;height:19px;background:#008080;"></div>
<div style="position:absolute;left:1020px;top:353px;width:1px;height:19px;background:#008080;"></div>
<div style="position:absolute;left:1076px;top:353px;width:1px;height:19px;background:#008080;"></div>
<div style="position:absolute;left:1109px;top:353px;width:1px;height:19px;background:#008080;"></div>
<div style="position:absolute;left:1140px;top:353px;width:1px;height:19px;background:#008080;"></div>
<div style="position:absolute;left:1171px;top:353px;width:1px;height:19px;background:#008080;"></div>
<div class="t" style="left:153.80px;top:355.85px;font-size:12.40px;line-height:12.40px;color:#000;transform:scaleX(0.8649);transform-origin:0 0;">10</div>
<div class="t" style="left:190.50px;top:356.85px;font-size:12.40px;line-height:12.40px;color:#000;transform:scaleX(0.8635);transform-origin:0 0;">F00010</div>
<div class="t" style="left:290.30px;top:355.85px;font-size:12.40px;line-height:12.40px;color:#000;transform:scaleX(0.8627);transform-origin:0 0;">5550010</div>
<div class="t" style="left:363.40px;top:356.25px;font-size:12.40px;line-height:12.40px;color:#0000ff;transform:scaleX(0.9035);transform-origin:0 0;text-decoration:underline;">Grapefruit</div>
<div class="t" style="left:641.00px;top:354.85px;font-size:12.40px;line-height:12.40px;color:#000;transform:scaleX(0.8884);transform-origin:0 0;">World of Fruit Associ...</div>
<div class="t" style="left:763.00px;top:355.85px;font-size:12.40px;line-height:12.40px;color:#000;transform:scaleX(0.8616);transform-origin:0 0;">N/A</div>
<div class="t" style="left:886.55px;top:355.85px;font-size:12.40px;line-height:12.40px;color:#000;transform:scaleX(0.8649);transform-origin:0 0;">1</div>
<div class="t" style="left:934.07px;top:355.85px;font-size:12.40px;line-height:12.40px;color:#000;transform:scaleX(0.8637);transform-origin:0 0;">3.00</div>
<div class="t" style="left:995.77px;top:355.85px;font-size:12.40px;line-height:12.40px;color:#000;transform:scaleX(0.8637);transform-origin:0 0;">4.00</div>
<div class="t" style="left:1048.89px;top:355.85px;font-size:12.40px;line-height:12.40px;color:#000;transform:scaleX(0.8630);transform-origin:0 0;">1000</div>
<svg style="position:absolute;left:1085px;top:356px;" width="16" height="12" viewBox="0 0 16 12"><path d="M2 2 Q8 -1.5 15.5 3.2" stroke="#a0a0a0" stroke-width="1.1" fill="none"/><path d="M1 4.5 Q8 1.5 15.5 6.2 Q12 10.5 8 10.5 Q4 10.5 1 4.5 Z" fill="#fff"/><circle cx="8.3" cy="5.6" r="3.2" fill="#108282"/><circle cx="8.2" cy="5.4" r="1.2" fill="#001818"/><path d="M2.8 8 Q8 12 14.5 7.4" stroke="#6a6a6a" stroke-width="1.1" fill="none"/><path d="M0.5 4.4 Q4 2.3 8 2.1 Q12 2.3 15.6 6.5" stroke="#111" stroke-width="1.6" fill="none"/></svg>
<svg style="position:absolute;left:1118px;top:353px;" width="15" height="18" viewBox="0 0 15 18"><path d="M3 2.5 H12 L14.5 5 V14.5 L12.5 16.5 H2.5 L0.5 14.5 V5 Z" fill="#c0c0c0" stroke="#000" stroke-width="1"/><g shape-rendering="crispEdges"><rect x="1" y="5" width="2" height="9" fill="#f4f4f4"/><rect x="12" y="5" width="2" height="9" fill="#8c8c8c"/><rect x="2" y="14" width="11" height="2" fill="#b4b4b4"/><rect x="3" y="2" width="9" height="12" fill="#111"/><rect x="4" y="3" width="7" height="10" fill="#fff"/><path d="M5 4 H10 V6 H7 V7 H9 V9 H7 V10 H10 V12 H5 Z" fill="#0000f0"/></g></svg>
<svg style="position:absolute;left:1151px;top:353px;" width="12" height="18" viewBox="0 0 12 18"><g shape-rendering="crispEdges"><rect x="2" y="5" width="6" height="11" fill="#fff"/><g fill="#000"><rect x="4" y="2" width="1" height="1"/><rect x="6" y="2" width="1" height="1"/><rect x="1" y="3" width="9" height="2"/><rect x="0" y="3.5" width="11" height="1"/><rect x="1" y="5" width="1" height="11"/><rect x="8" y="5" width="2" height="11"/><rect x="3" y="7" width="1" height="8"/><rect x="5" y="7" width="1" height="8"/><rect x="2" y="16" width="7" height="1"/></g><rect x="5" y="2" width="1" height="1" fill="#bbb"/><rect x="7" y="5" width="1" height="10" fill="#ddd"/></g></svg>
<div style="position:absolute;left:151px;top:182px;width:1021px;height:1px;background:transparent;background-image:repeating-linear-gradient(90deg,#000 0 1px,#fff 1px 2px);"></div>
<div style="position:absolute;left:151px;top:199px;width:1021px;height:1px;background:transparent;background-image:repeating-linear-gradient(90deg,#000 0 1px,#fff 1px 2px);"></div>
<div style="position:absolute;left:153px;top:651px;width:77px;height:12px;background:#fdf5e8;"></div>
<div style="position:absolute;left:232px;top:651px;width:52px;height:12px;background:#fdf5e8;"></div>
<div style="position:absolute;left:289px;top:651px;width:68px;height:12px;background:#fdf5e8;"></div>
<div style="position:absolute;left:154px;top:670px;width:93px;height:13px;background:#fdf5e8;"></div>
<div style="position:absolute;left:252px;top:670px;width:57px;height:13px;background:#fdf5e8;"></div>
<div style="position:absolute;left:313px;top:670px;width:95px;height:13px;background:#fdf5e8;"></div>
<div class="t" style="left:168.70px;top:653.18px;font-size:11.30px;line-height:11.30px;color:#000;transform:scaleX(0.9554);transform-origin:0 0;">Has Variants</div>
<div class="t" style="left:247.40px;top:653.18px;font-size:11.30px;line-height:11.30px;color:#000;transform:scaleX(0.9398);transform-origin:0 0;">Item Kit</div>
<div class="t" style="left:303.70px;top:653.18px;font-size:11.30px;line-height:11.30px;color:#000;transform:scaleX(0.9592);transform-origin:0 0;">Incomplete</div>
<div class="t" style="left:382.40px;top:653.18px;font-size:11.30px;line-height:11.30px;color:#000;transform:scaleX(0.9822);transform-origin:0 0;">Finished Product</div>
<div class="t" style="left:172.20px;top:672.38px;font-size:11.30px;line-height:11.30px;color:#000;transform:scaleX(0.9450);transform-origin:0 0;">Assembly Item</div>
<div class="t" style="left:266.70px;top:672.38px;font-size:11.30px;line-height:11.30px;color:#000;">Service</div>
<div class="t" style="left:331.50px;top:672.38px;font-size:11.30px;line-height:11.30px;color:#000;transform:scaleX(0.9845);transform-origin:0 0;">Drop Ship Item</div>
<svg style="position:absolute;left:152px;top:650px;" width="14" height="14" viewBox="0 0 14 14"><rect x="4.5" y="0.5" width="5" height="5" rx="1" fill="#7fd8e8" stroke="#1a4a60" stroke-width="0.8"/><circle cx="4" cy="9.5" r="3.4" fill="#f0e838" stroke="#333" stroke-width="0.8"/><circle cx="10" cy="9.5" r="3.4" fill="#d01818" stroke="#333" stroke-width="0.8"/></svg>
<svg style="position:absolute;left:233px;top:651px;" width="12" height="12" viewBox="0 0 12 12"><path d="M6 0.5 L11.5 3 V9 L6 11.5 L0.5 9 V3 Z" fill="#40c8d8" stroke="#1a6a80" stroke-width="0.8"/><path d="M3.5 4.5 L6 3.3 L8.5 4.5 V7.5 L6 8.7 L3.5 7.5 Z" fill="#a8f0f8"/></svg>
<svg style="position:absolute;left:289px;top:651px;" width="12" height="12" viewBox="0 0 12 12"><path d="M6 1 A5 5 0 1 0 11 6 L6 6 Z" fill="#c01818" stroke="#601010" stroke-width="0.6"/><path d="M4 1 L6 0 L7 2" stroke="#601010" stroke-width="1" fill="none"/></svg>
<svg style="position:absolute;left:364px;top:651px;" width="17" height="14" viewBox="0 0 17 14"><path d="M1 4 L6 1.5 L13 3 V12 L7 14 L1 12 Z" fill="#a07820"/><path d="M1 4 L7 6 L13 3 M7 6 V14" stroke="#604810" stroke-width="0.8" fill="none"/><rect x="11" y="3" width="5" height="11" fill="#222"/><circle cx="13.5" cy="5" r="1.2" fill="#e22"/><circle cx="13.5" cy="8.2" r="1.2" fill="#dd2"/><circle cx="13.5" cy="11.5" r="1.4" fill="#2c2"/></svg>
<svg style="position:absolute;left:154px;top:670px;" width="16" height="14" viewBox="0 0 16 14"><rect x="3" y="3" width="10" height="9" fill="#9a7a30"/><path d="M1 1 L15 13 M15 1 L1 13" stroke="#222" stroke-width="1.6"/><rect x="6" y="3" width="4" height="9" fill="#3a2a10"/></svg>
<svg style="position:absolute;left:252px;top:670px;" width="14" height="14" viewBox="0 0 14 14"><path d="M2 12 L11 3" stroke="#222" stroke-width="2.2"/><path d="M3 2 L12 12" stroke="#333" stroke-width="2"/><path d="M9 1 L13 4" stroke="#e04020" stroke-width="2.4"/><circle cx="3" cy="3" r="2" fill="none" stroke="#333" stroke-width="1.2"/></svg>
<svg style="position:absolute;left:316px;top:672px;" width="13" height="10" viewBox="0 0 13 10"><rect x="4" y="0.5" width="8.5" height="7" fill="#111"/><path d="M0.5 4 L2 2 H4 V7.5 H0.5 Z" fill="#222"/><circle cx="3" cy="8.3" r="1.5" fill="#333"/><circle cx="10" cy="8.3" r="1.5" fill="#333"/></svg>
<div class="t" style="left:159.00px;top:687.92px;font-size:10.20px;line-height:10.20px;color:#c3c3c3;transform:scaleX(0.9054);transform-origin:0 0;">Click on the icon above to sort by product type. Click the ViewGlass</div>
<div class="t" style="left:159.00px;top:697.92px;font-size:10.20px;line-height:10.20px;color:#c3c3c3;transform:scaleX(0.9053);transform-origin:0 0;">search button at the top right of the page to view ALL products again.</div>
<div style="position:absolute;left:1006px;top:690px;width:88px;height:23px;background:#f0f0f0;box-sizing:border-box;border-top:1px solid #fff;border-left:1px solid #fff;border-bottom:1px solid #696969;border-right:1px solid #696969;"><div style="position:absolute;left:0;top:0;right:0;bottom:0;border-bottom:1px solid #a0a0a0;border-right:1px solid #a0a0a0;"></div></div>
<svg style="position:absolute;left:1010px;top:694px;" width="14" height="13" viewBox="0 0 14 13"><path d="M3.5 0.5 H8.5 L10.5 2.5 V6 H3.5 Z" fill="#fff" stroke="#111" stroke-width="1"/><path d="M0.5 5.5 H13.5 V12.5 H0.5 Z" fill="#f6e27a" stroke="#111" stroke-width="1"/><rect x="2" y="8" width="10" height="1.6" fill="#fff"/></svg>
<div class="t" style="left:1029.90px;top:695.69px;font-size:12.00px;line-height:12.00px;color:#101040;transform:scaleX(0.9250);transform-origin:0 0;">Print/Export</div>
<div style="position:absolute;left:1099px;top:690px;width:24px;height:24px;background:#f9f9f9;box-sizing:border-box;border-left:1px solid #fff;border-top:1px solid #fff;border-right:2px solid #000;border-bottom:2px solid #000;"></div>
<svg style="position:absolute;left:1103px;top:694px;" width="16" height="16" viewBox="0 0 16 16"><g shape-rendering="crispEdges"><rect x="0" y="0" width="16" height="16" fill="#006a00"/><rect x="2" y="2" width="12" height="12" fill="#fff"/></g><rect x="3" y="3" width="10" height="9.5" fill="#006a00"/><path d="M6.3 3 H9.6 L8 5.2 Z M3 5.6 V8.8 L5.2 7.2 Z M13 5.6 V8.8 L10.8 7.2 Z M6 12.5 H9 L7.6 10.6 Z" fill="#fff"/><path d="M4 4.3 L10.6 11" stroke="#fff" stroke-width="0.9" stroke-dasharray="1 0.6"/></svg>
<div style="position:absolute;left:1128px;top:690px;width:45px;height:23px;background:#f0f0f0;box-sizing:border-box;border-top:1px solid #fff;border-left:1px solid #fff;border-bottom:1px solid #696969;border-right:1px solid #696969;"><div style="position:absolute;left:0;top:0;right:0;bottom:0;border-bottom:1px solid #a0a0a0;border-right:1px solid #a0a0a0;"></div></div>
<div class="t" style="left:1135.70px;top:695.69px;font-size:12.00px;line-height:12.00px;color:#101040;transform:scaleX(0.9459);transform-origin:0 0;">Close</div>
<div style="position:absolute;left:0px;top:723px;width:1187px;height:1px;background:#5b95d0;"></div>
<div style="position:absolute;left:1186px;top:31px;width:1px;height:693px;background:#5b95d0;"></div>
<svg style="position:absolute;left:0px;top:0px;pointer-events:none;" width="1187" height="724" viewBox="0 0 1187 724"><rect x="149.5" y="179.5" width="1023" height="61" rx="1" fill="none" stroke="#ff0000" stroke-width="5"/><path d="M919.5 396.5 V262 M980 396.5 V262 M917 396.5 H982.5" stroke="#ff0000" stroke-width="5" fill="none" stroke-linejoin="round"/><path d="M912 266 L919.5 243 L927 266 Z M972.5 266 L980 243 L987.5 266 Z" fill="#ff0000"/><path d="M951.5 399 V434" stroke="#ff0000" stroke-width="3"/><rect x="824.5" y="434.5" width="258" height="32" fill="#fff" stroke="#ff0000" stroke-width="3"/></svg>
<div class="t" style="left:833.00px;top:442.25px;font-size:17.60px;line-height:17.60px;color:#ff0000;">New</div>
<div class="t" style="left:874.80px;top:442.25px;font-size:17.60px;line-height:17.60px;color:#ff0000;transform:scaleX(0.8421);transform-origin:0 0;">COST</div>
<div class="t" style="left:922.60px;top:442.25px;font-size:17.60px;line-height:17.60px;color:#ff0000;">and</div>
<div class="t" style="left:959.60px;top:442.25px;font-size:17.60px;line-height:17.60px;color:#ff0000;transform:scaleX(0.8580);transform-origin:0 0;">SELLING</div>
<div class="t" style="left:1031.70px;top:442.25px;font-size:17.60px;line-height:17.60px;color:#ff0000;transform:scaleX(1.0081);transform-origin:0 0;">price</div>
</body></html>
